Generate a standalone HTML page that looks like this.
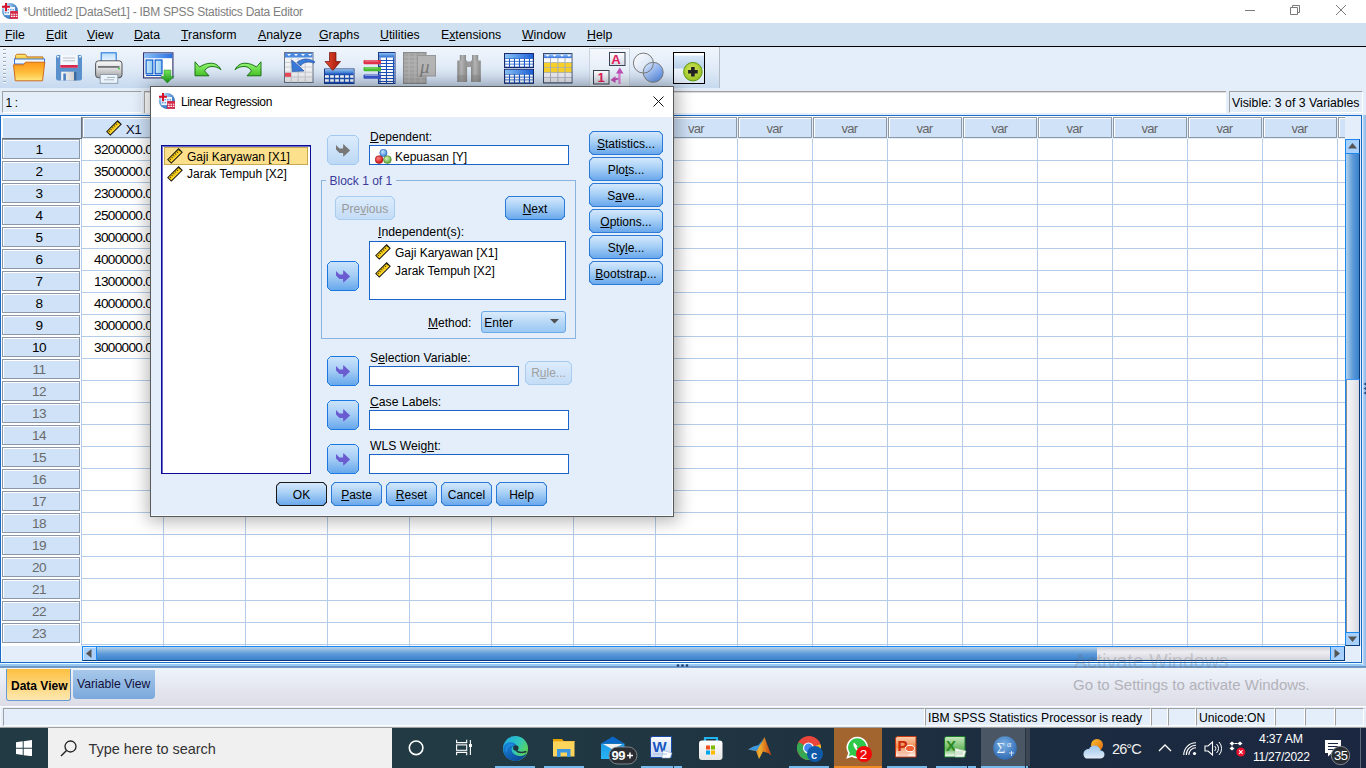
<!DOCTYPE html><html><head><meta charset="utf-8"><style>
*{margin:0;padding:0;box-sizing:border-box}
html,body{width:1366px;height:768px;overflow:hidden}
body{position:relative;font-family:"Liberation Sans",sans-serif;background:#e3eefa;color:#000}
div{position:absolute}
u{text-decoration:underline}
</style></head><body>
<div style="position:absolute;left:0px;top:0px;width:1366px;height:23px;background:#fff"></div>
<svg style="position:absolute;left:-1px;top:0px" width="22" height="22" viewBox="0 0 22 22"><defs><radialGradient id="ic1" cx="0.3" cy="0.3" r="0.75"><stop offset="0" stop-color="#d8f0fc"/><stop offset="0.55" stop-color="#6aa4dc"/><stop offset="1" stop-color="#2a64b0"/></radialGradient></defs><circle cx="10.9" cy="10.9" r="8" fill="url(#ic1)"/><rect x="5.3" y="7" width="10.7" height="8" fill="#eef5fc"/><path d="M8.5 9.8h1.5M11 9.8h1.5M13.5 9.8h1.5M6 12.8h1.5M8.5 12.8h1.5M11 12.8h1.5" stroke="#3a7ad0" stroke-width="1"/><path d="M7 2.9v8.3M3 6.7h7.9" stroke="#d8102a" stroke-width="2"/><rect x="11.2" y="11" width="7.8" height="7.9" fill="#d42a4a"/><path d="M12 14.2h1.6M14.4 14.2h1.6M16.8 14.2h1.6M12 16.4h1.6M14.4 16.4h1.6M16.8 16.4h1.6" stroke="#fff" stroke-width="1.1"/></svg>
<div style="position:absolute;left:23px;top:6.14px;font-size:12px;line-height:1;white-space:pre;color:#7e7e7e;letter-spacing:-0.26px">*Untitled2 [DataSet1] - IBM SPSS Statistics Data Editor</div>
<div style="position:absolute;left:1245px;top:10px;width:10px;height:1px;background:#7a7a7a"></div>
<svg style="position:absolute;left:1289px;top:4px" width="12" height="12" viewBox="0 0 12 12"><path d="M1.5 3.5h7v7h-7zM3.5 3.5v-2h7v7h-2" fill="none" stroke="#7a7a7a" stroke-width="1"/></svg>
<svg style="position:absolute;left:1335px;top:4px" width="12" height="12" viewBox="0 0 12 12"><path d="M1 1L11 11M11 1L1 11" stroke="#7a7a7a" stroke-width="1"/></svg>
<div style="position:absolute;left:0px;top:23px;width:1366px;height:23px;background:#cfe0f1"></div>
<div style="position:absolute;left:0px;top:46px;width:1366px;height:1px;background:#000"></div>
<div style="position:absolute;left:5px;top:29.19px;font-size:12.3px;line-height:1;white-space:pre;color:#000;"><u>F</u>ile</div>
<div style="position:absolute;left:46px;top:29.19px;font-size:12.3px;line-height:1;white-space:pre;color:#000;"><u>E</u>dit</div>
<div style="position:absolute;left:87px;top:29.19px;font-size:12.3px;line-height:1;white-space:pre;color:#000;"><u>V</u>iew</div>
<div style="position:absolute;left:134px;top:29.19px;font-size:12.3px;line-height:1;white-space:pre;color:#000;"><u>D</u>ata</div>
<div style="position:absolute;left:181px;top:29.19px;font-size:12.3px;line-height:1;white-space:pre;color:#000;"><u>T</u>ransform</div>
<div style="position:absolute;left:258px;top:29.19px;font-size:12.3px;line-height:1;white-space:pre;color:#000;"><u>A</u>nalyze</div>
<div style="position:absolute;left:319px;top:29.19px;font-size:12.3px;line-height:1;white-space:pre;color:#000;"><u>G</u>raphs</div>
<div style="position:absolute;left:380px;top:29.19px;font-size:12.3px;line-height:1;white-space:pre;color:#000;"><u>U</u>tilities</div>
<div style="position:absolute;left:441px;top:29.19px;font-size:12.3px;line-height:1;white-space:pre;color:#000;">E<u>x</u>tensions</div>
<div style="position:absolute;left:522px;top:29.19px;font-size:12.3px;line-height:1;white-space:pre;color:#000;"><u>W</u>indow</div>
<div style="position:absolute;left:587px;top:29.19px;font-size:12.3px;line-height:1;white-space:pre;color:#000;"><u>H</u>elp</div>
<div style="position:absolute;left:0px;top:47px;width:1366px;height:41px;background:#e3eefa"></div>
<div style="position:absolute;left:0px;top:47px;width:720px;height:42px;background:linear-gradient(#f0f5fc,#dfeaf7 55%,#c6d9ef);border-bottom:1px solid #a0a8b4;border-right:1px solid #b4bcc8"></div>
<div style="position:absolute;left:3px;top:49px;width:3px;height:36px;background:repeating-linear-gradient(#9aaac0 0 1px,#ffffff 1px 2px,transparent 2px 4px)"></div>
<svg style="position:absolute;left:13px;top:53px" width="33" height="29" viewBox="0 0 33 29"><defs><linearGradient id="gf" x1="0" y1="0" x2="0" y2="1"><stop offset="0" stop-color="#ff9818"/><stop offset="0.6" stop-color="#ffc040"/><stop offset="1" stop-color="#ffe880"/></linearGradient><linearGradient id="gb" x1="0" y1="0" x2="0" y2="1"><stop offset="0" stop-color="#fff080"/><stop offset="1" stop-color="#f0b020"/></linearGradient></defs>
<path d="M2.5 7.5V3.5c0-1.2 0.6-2.2 1.8-2.2h7.5c1.1 0 1.6 1 2.1 2.6h16v3.6z" fill="url(#gb)" stroke="#c06810" stroke-width="0.9"/>
<rect x="1.5" y="6" width="30" height="5" fill="#f0f8fc" stroke="#2a6ad8" stroke-width="0.9"/>
<path d="M0.5 11.8h10l2-2.6h19.3l-2.3 18.6H2.3z" fill="url(#gf)" stroke="#c86010" stroke-width="0.9"/></svg>
<svg style="position:absolute;left:56px;top:55px" width="26" height="26" viewBox="0 0 26 26"><defs><linearGradient id="gs" x1="0" y1="0" x2="1" y2="0"><stop offset="0" stop-color="#fafafa"/><stop offset="1" stop-color="#c8c8c8"/></linearGradient></defs>
<rect x="0" y="0" width="26" height="25.5" rx="2.2" fill="#5a90cc"/><rect x="4.3" y="0" width="17.5" height="12.8" fill="#f4f8fc"/>
<path d="M7 3h12M7 5.8h12" stroke="#a8b0b8" stroke-width="0.8"/><rect x="4.3" y="10" width="17.5" height="2.8" fill="#d82850"/>
<rect x="5.2" y="16.7" width="15" height="8.8" fill="url(#gs)"/><rect x="7.3" y="18.5" width="2.6" height="7" fill="#4a80c0"/><rect x="18" y="16.7" width="2.5" height="8.8" fill="#3a6aa0"/>
<rect x="1" y="1" width="2" height="1.5" fill="#e8f0f8"/><rect x="23" y="1" width="2" height="1.5" fill="#e8f0f8"/></svg>
<svg style="position:absolute;left:95px;top:52px" width="28" height="32" viewBox="0 0 28 32"><defs><linearGradient id="gp1" x1="0" y1="0" x2="0" y2="1"><stop offset="0" stop-color="#b8dcfc"/><stop offset="1" stop-color="#f4faff"/></linearGradient><linearGradient id="gp2" x1="0" y1="0" x2="0" y2="1"><stop offset="0" stop-color="#fafafa"/><stop offset="0.5" stop-color="#d8d8d8"/><stop offset="1" stop-color="#a0a0a0"/></linearGradient></defs>
<rect x="6.2" y="0.8" width="15" height="10.5" fill="url(#gp1)" stroke="#1a70d8"/>
<rect x="0.6" y="8.8" width="26.4" height="17" rx="3" fill="url(#gp2)" stroke="#404448" stroke-width="0.9"/>
<rect x="3" y="14" width="21.5" height="1.8" fill="#707478"/><rect x="23" y="15.8" width="2" height="1.5" fill="#40d040"/>
<rect x="5.2" y="22.5" width="17.6" height="8.8" fill="#eaf4fc" stroke="#8a98a8" stroke-width="0.9"/><path d="M12 25.5h8M9 27.8h10" stroke="#9aa4b0" stroke-width="0.8"/></svg>
<svg style="position:absolute;left:143px;top:52px" width="32" height="32" viewBox="0 0 32 32"><defs><linearGradient id="dh" x1="0" y1="0" x2="1" y2="0"><stop offset="0" stop-color="#8ac0f8"/><stop offset="1" stop-color="#2a70e0"/></linearGradient><linearGradient id="dc" x1="0" y1="0" x2="1" y2="0"><stop offset="0" stop-color="#d0ecfc"/><stop offset="1" stop-color="#8cc8ec"/></linearGradient><linearGradient id="da" x1="0" y1="0" x2="0" y2="1"><stop offset="0" stop-color="#7ae860"/><stop offset="1" stop-color="#18a018"/></linearGradient></defs>
<rect x="0.6" y="0.9" width="29.3" height="25" fill="#fff" stroke="#2a2a6a" stroke-width="1.1"/><rect x="1.2" y="1.5" width="28.2" height="4.7" fill="url(#dh)"/>
<rect x="3.1" y="8" width="6.7" height="13.8" fill="url(#dc)" stroke="#0a5ad0" stroke-width="1.2"/><rect x="12.2" y="8" width="6.8" height="13.8" fill="url(#dc)" stroke="#0a5ad0" stroke-width="1.2"/><rect x="3" y="23" width="15.5" height="1" fill="#0a5ad0"/>
<path d="M21 18.1h6.8v6.3h3.1l-6.5 6.5-6.5-6.5h3.1z" fill="url(#da)" stroke="#108a10" stroke-width="0.5"/></svg>
<svg style="position:absolute;left:194px;top:61px" width="28" height="16" viewBox="0 0 28 16"><defs><linearGradient id="gu" x1="0" y1="0" x2="0" y2="1"><stop offset="0" stop-color="#9af878"/><stop offset="1" stop-color="#4ac828"/></linearGradient></defs>
<path d="M1 0.8V14.8H15L10.5 9.9C12.5 6.7 15 5.5 18 5.5 21.5 5.5 24.5 6.7 27 8.7 25 4.7 21.5 2.2 17 2.2 12.5 2.2 8.5 4 5.5 6Z" fill="url(#gu)" stroke="#0e6a0a" stroke-width="0.9" stroke-linejoin="round"/></svg>
<svg style="position:absolute;left:234px;top:61px" width="28" height="16" viewBox="0 0 28 16"><defs><linearGradient id="gr" x1="0" y1="0" x2="0" y2="1"><stop offset="0" stop-color="#9af878"/><stop offset="1" stop-color="#4ac828"/></linearGradient></defs>
<path d="M27 0.8V14.8H13L17.5 9.9C15.5 6.7 13 5.5 10 5.5 6.5 5.5 3.5 6.7 1 8.7 3 4.7 6.5 2.2 11 2.2 15.5 2.2 19.5 4 22.5 6Z" fill="url(#gr)" stroke="#0e6a0a" stroke-width="0.9" stroke-linejoin="round"/></svg>
<svg style="position:absolute;left:284px;top:52px" width="32" height="32" viewBox="0 0 32 32">
<rect x="0.5" y="0.5" width="28.5" height="30" fill="#f0f2f4" stroke="#6a7488"/><rect x="1" y="1" width="27.5" height="4.5" fill="#4a8ae0"/>
<path d="M3 2l2 2 2-2zM10 2l2 2 2-2zM17 2l2 2 2-2zM24 2l2 2 2-2z" fill="#fff"/>
<path d="M1 10.5h27.5M1 15h27.5M1 20.2h27.5M1 25h27.5M7.2 5.5v25M14.2 5.5v25M21.2 5.5v25" stroke="#c4c8d0" stroke-width="0.9"/>
<rect x="1" y="20.8" width="6" height="4" fill="#f04a5a"/>
<path d="M13 10.5C17 6.5 25 5.5 30.8 9.8L30 11.2C25 8.8 19.5 9.8 16.5 14Z" fill="#3a7ad8" stroke="#1a4aa0" stroke-width="0.6"/>
<path d="M7.7 8L8.3 19.5 20 19C17 16 13 12 7.7 8Z" fill="#3a7ad8" stroke="#1a4aa0" stroke-width="0.6"/></svg>
<svg style="position:absolute;left:324px;top:52px" width="31" height="32" viewBox="0 0 31 32"><defs><linearGradient id="ih" x1="0" y1="0" x2="0" y2="1"><stop offset="0" stop-color="#8ac0f0"/><stop offset="1" stop-color="#2a6ad0"/></linearGradient><linearGradient id="ia" x1="0" y1="0" x2="1" y2="0"><stop offset="0" stop-color="#e84a30"/><stop offset="1" stop-color="#a01808"/></linearGradient></defs>
<rect x="0.5" y="17" width="29.5" height="14.5" fill="#fff" stroke="#1a3a8a"/><rect x="1" y="17.5" width="28.5" height="4.5" fill="url(#ih)"/>
<path d="M1 22.5h28.5M1 26.5h28.5M1 30.5h28.5M5.5 22v9M10.5 22v9M15.5 22v9M20.5 22v9M25.5 22v9" stroke="#1a50b8" stroke-width="1.3"/>
<path d="M5.5 0.5h6.5v9h4.5L8.8 18.5 1 9.5h4.5z" fill="url(#ia)" stroke="#701008" stroke-width="0.7"/></svg>
<svg style="position:absolute;left:363px;top:52px" width="33" height="32" viewBox="0 0 33 32"><defs><linearGradient id="vh" x1="0" y1="0" x2="0" y2="1"><stop offset="0" stop-color="#8ac0f0"/><stop offset="1" stop-color="#2a6ad0"/></linearGradient></defs>
<rect x="15.5" y="0.5" width="16.5" height="31" fill="#fff" stroke="#1a3a8a"/><rect x="16" y="1" width="15.5" height="4.5" fill="url(#vh)"/>
<path d="M16 8.5h15.5M16 11.5h15.5M16 14.5h15.5M16 17.5h15.5M16 20.5h15.5M16 23.5h15.5M16 26.5h15.5M16 29.5h15.5M17 5.5v26M23.5 5.5v26M30.5 5.5v26" stroke="#1a50b8" stroke-width="1.1"/>
<rect x="0.5" y="8" width="17.5" height="4.2" rx="1" fill="#e0304a"/><rect x="0.5" y="15" width="17.5" height="4.2" rx="1" fill="#48c030"/><rect x="0.5" y="22.5" width="17.5" height="4.2" rx="1" fill="#3a58d0"/>
<path d="M2 9h13M2 16h13M2 23.5h13" stroke="#fff" stroke-opacity="0.45"/></svg>
<svg style="position:absolute;left:403px;top:52px" width="33" height="32" viewBox="0 0 33 32">
<rect x="0.5" y="0.5" width="22.5" height="31" fill="#a4a4a4" stroke="#8a8a8a"/><path d="M1 5h22M1 9h22M1 13h22M1 17h22M1 21h22M1 25h22M1 29h22M6 1v30M12 1v30M18 1v30" stroke="#b8b8b8" stroke-width="0.9"/>
<rect x="14.5" y="3.5" width="18" height="20.5" fill="#b4b4b4" stroke="#989898"/><text x="17" y="21" font-family="Liberation Serif" font-style="italic" font-size="19" fill="#7a7a7a">μ</text></svg>
<svg style="position:absolute;left:457px;top:55px" width="25" height="28" viewBox="0 0 25 28"><defs><linearGradient id="bn" x1="0" y1="0" x2="1" y2="0"><stop offset="0" stop-color="#888"/><stop offset="0.4" stop-color="#b4b4b4"/><stop offset="1" stop-color="#8a8a8a"/></linearGradient></defs>
<rect x="2.8" y="0" width="6.2" height="6.5" fill="url(#bn)"/><rect x="15" y="0" width="6.2" height="6.5" fill="url(#bn)"/>
<rect x="0.3" y="5.5" width="9.8" height="21.5" fill="url(#bn)"/><rect x="14" y="5.5" width="9.8" height="21.5" fill="url(#bn)"/>
<rect x="9.5" y="6.5" width="5" height="5.5" fill="#9a9a9a"/><rect x="0.3" y="20" width="9.8" height="7" fill="#8a8a8a" opacity="0.5"/><rect x="14" y="20" width="9.8" height="7" fill="#8a8a8a" opacity="0.5"/></svg>
<svg style="position:absolute;left:504px;top:53px" width="31" height="31" viewBox="0 0 31 31"><defs><linearGradient id="sh" x1="0" y1="0" x2="1" y2="0"><stop offset="0" stop-color="#8ac4f8"/><stop offset="1" stop-color="#1a60d8"/></linearGradient></defs><rect x="0.5" y="0.5" width="29" height="14" fill="#1a5ac8" stroke="#1a2a6a"/><rect x="1" y="1" width="28" height="4.3" fill="url(#sh)"/><rect x="1.2" y="5.9" width="3.8" height="2.0" fill="#fff"/><rect x="1.2" y="8.7" width="3.8" height="2.0" fill="#fff"/><rect x="1.2" y="11.5" width="3.8" height="2.1" fill="#fff"/><rect x="6" y="5.9" width="3.9" height="2.0" fill="#fff"/><rect x="6" y="8.7" width="3.9" height="2.0" fill="#fff"/><rect x="6" y="11.5" width="3.9" height="2.1" fill="#fff"/><rect x="11" y="5.9" width="3.9" height="2.0" fill="#fff"/><rect x="11" y="8.7" width="3.9" height="2.0" fill="#fff"/><rect x="11" y="11.5" width="3.9" height="2.1" fill="#fff"/><rect x="16" y="5.9" width="3.9" height="2.0" fill="#fff"/><rect x="16" y="8.7" width="3.9" height="2.0" fill="#fff"/><rect x="16" y="11.5" width="3.9" height="2.1" fill="#fff"/><rect x="21" y="5.9" width="3.9" height="2.0" fill="#fff"/><rect x="21" y="8.7" width="3.9" height="2.0" fill="#fff"/><rect x="21" y="11.5" width="3.9" height="2.1" fill="#fff"/><rect x="26" y="5.9" width="2.8" height="2.0" fill="#fff"/><rect x="26" y="8.7" width="2.8" height="2.0" fill="#fff"/><rect x="26" y="11.5" width="2.8" height="2.1" fill="#fff"/><rect x="0.5" y="16.3" width="29" height="14" fill="#1a5ac8" stroke="#1a2a6a"/><rect x="1" y="16.8" width="28" height="4.3" fill="url(#sh)"/><rect x="1.2" y="21.700000000000003" width="3.8" height="2.0" fill="#fff"/><rect x="1.2" y="24.5" width="3.8" height="2.0" fill="#fff"/><rect x="1.2" y="27.3" width="3.8" height="2.1" fill="#fff"/><rect x="6" y="21.700000000000003" width="3.9" height="2.0" fill="#fff"/><rect x="6" y="24.5" width="3.9" height="2.0" fill="#fff"/><rect x="6" y="27.3" width="3.9" height="2.1" fill="#fff"/><rect x="11" y="21.700000000000003" width="3.9" height="2.0" fill="#fff"/><rect x="11" y="24.5" width="3.9" height="2.0" fill="#fff"/><rect x="11" y="27.3" width="3.9" height="2.1" fill="#fff"/><rect x="16" y="21.700000000000003" width="3.9" height="2.0" fill="#fff"/><rect x="16" y="24.5" width="3.9" height="2.0" fill="#fff"/><rect x="16" y="27.3" width="3.9" height="2.1" fill="#fff"/><rect x="21" y="21.700000000000003" width="3.9" height="2.0" fill="#fff"/><rect x="21" y="24.5" width="3.9" height="2.0" fill="#fff"/><rect x="21" y="27.3" width="3.9" height="2.1" fill="#fff"/><rect x="26" y="21.700000000000003" width="2.8" height="2.0" fill="#fff"/><rect x="26" y="24.5" width="2.8" height="2.0" fill="#fff"/><rect x="26" y="27.3" width="2.8" height="2.1" fill="#fff"/></svg>
<svg style="position:absolute;left:543px;top:53px" width="30" height="31" viewBox="0 0 30 31"><defs><linearGradient id="sc" x1="0" y1="0" x2="0" y2="1"><stop offset="0" stop-color="#a0c8f8"/><stop offset="1" stop-color="#3a78e0"/></linearGradient></defs><rect x="0.5" y="0.5" width="28.5" height="29.5" fill="#a4acbc" stroke="#3a4a6a"/><rect x="1" y="1" width="27.5" height="4" fill="url(#sc)"/><path d="M2.5 1.8l2 2 2-2zM9.5 1.8l2 2 2-2zM17 1.8l2 2 2-2zM24 1.8l2 2 2-2z" fill="#fff"/><rect x="1" y="5.2" width="6.0" height="4.0" fill="#fafafa"/><rect x="1" y="9.9" width="6.0" height="4.4" fill="#f8d028"/><rect x="1" y="15" width="6.0" height="4.2" fill="#f8d028"/><rect x="1" y="19.9" width="6.0" height="4.3" fill="#ececf0"/><rect x="1" y="24.9" width="6.0" height="4.1" fill="#e4e4ea"/><rect x="8" y="5.2" width="6.4" height="4.0" fill="#fafafa"/><rect x="8" y="9.9" width="6.4" height="4.4" fill="#f8d028"/><rect x="8" y="15" width="6.4" height="4.2" fill="#f8d028"/><rect x="8" y="19.9" width="6.4" height="4.3" fill="#ececf0"/><rect x="8" y="24.9" width="6.4" height="4.1" fill="#e4e4ea"/><rect x="15.4" y="5.2" width="6.1" height="4.0" fill="#fafafa"/><rect x="15.4" y="9.9" width="6.1" height="4.4" fill="#f8d028"/><rect x="15.4" y="15" width="6.1" height="4.2" fill="#f8d028"/><rect x="15.4" y="19.9" width="6.1" height="4.3" fill="#ececf0"/><rect x="15.4" y="24.9" width="6.1" height="4.1" fill="#e4e4ea"/><rect x="22.5" y="5.2" width="6.0" height="4.0" fill="#fafafa"/><rect x="22.5" y="9.9" width="6.0" height="4.4" fill="#f8d028"/><rect x="22.5" y="15" width="6.0" height="4.2" fill="#f8d028"/><rect x="22.5" y="19.9" width="6.0" height="4.3" fill="#ececf0"/><rect x="22.5" y="24.9" width="6.0" height="4.1" fill="#e4e4ea"/></svg>
<div style="position:absolute;left:589px;top:48px;width:41px;height:40px;border:1px solid #c8d4e0;border-bottom:none;background:linear-gradient(#f4f8fc,#dde8f4)"></div>
<svg style="position:absolute;left:593px;top:52px" width="33" height="33" viewBox="0 0 33 33"><defs><linearGradient id="vb" x1="0" y1="0" x2="0" y2="1"><stop offset="0" stop-color="#fff"/><stop offset="1" stop-color="#d4dae4"/></linearGradient><linearGradient id="va" x1="0" y1="0" x2="1" y2="0"><stop offset="0" stop-color="#b040a8"/><stop offset="1" stop-color="#e080d8"/></linearGradient></defs>
<rect x="16.5" y="0.5" width="15.5" height="13" fill="url(#vb)" stroke="#3a4456"/><text x="18.3" y="12" font-family="Liberation Sans" font-weight="bold" font-size="13" fill="#e0205a">A</text>
<rect x="0.5" y="18.5" width="15.5" height="13.5" fill="url(#vb)" stroke="#3a4456"/><text x="4.5" y="30" font-family="Liberation Sans" font-weight="bold" font-size="13" fill="#e0205a">1</text>
<path d="M26.5 32V21M26.5 26.5C25 26.5 23.5 27 22 27.5" fill="none" stroke="url(#va)" stroke-width="2.2"/><path d="M23 21.5L26.8 15.5 30.5 21.5z" fill="#c050b8"/><path d="M22.5 24L17.5 28 22.5 31z" fill="#c050b8"/></svg>
<svg style="position:absolute;left:632px;top:52px" width="33" height="32" viewBox="0 0 33 32">
<defs><linearGradient id="cb1" x1="0" y1="0" x2="1" y2="1"><stop offset="0" stop-color="#ffffff"/><stop offset="1" stop-color="#c8d8f0"/></linearGradient><linearGradient id="cb2" x1="0" y1="0" x2="1" y2="1"><stop offset="0" stop-color="#e0ecfc"/><stop offset="1" stop-color="#4a82e4"/></linearGradient></defs>
<circle cx="11.4" cy="11.1" r="10" fill="url(#cb1)"/><circle cx="21.2" cy="20.3" r="10" fill="url(#cb2)" stroke="#7a7a7a" stroke-width="1"/><circle cx="11.4" cy="11.1" r="10" fill="none" stroke="#7a7a7a" stroke-width="1"/></svg>
<div style="position:absolute;left:673px;top:52px;width:32px;height:32px;border:1px solid #000;background:linear-gradient(#ffffff 0 2px,#d8e8f8 3px,#b8d0ea 15px,#eef4fc 16px,#dce8f6)"></div>
<svg style="position:absolute;left:683px;top:62px" width="20" height="20" viewBox="0 0 20 20"><defs><radialGradient id="gc" cx="0.45" cy="0.4" r="0.6"><stop offset="0" stop-color="#d8e860"/><stop offset="1" stop-color="#98c020"/></radialGradient></defs>
<circle cx="9.9" cy="9.7" r="9.3" fill="url(#gc)" stroke="#5a9a10" stroke-width="1"/><path d="M9.9 5v9.5M5.1 9.7h9.6" stroke="#222" stroke-width="3.6"/></svg>
<div style="position:absolute;left:0px;top:88px;width:1366px;height:27px;background:#e3eefa"></div>
<div style="position:absolute;left:2px;top:91px;width:140px;height:22px;border-top:1px solid #a0a0a0;border-left:1px solid #a0a0a0;border-right:1px solid #f4f8fc;border-bottom:1px solid #fff;background:#e3eefa"></div>
<div style="position:absolute;left:5.5px;top:97.44px;font-size:12px;line-height:1;white-space:pre;color:#000;letter-spacing:-0.4px">1 :</div>
<div style="position:absolute;left:144px;top:91px;width:1082px;height:22px;border-top:1px solid #a0a0a0;border-left:1px solid #a8a8a8;background:#fff;box-shadow:inset 0 1px 0 #dcdcdc"></div>
<div style="position:absolute;left:1229px;top:91px;width:134px;height:22px;border-top:1px solid #a0a0a0;border-left:1px solid #a0a0a0;border-right:1px solid #fff;border-bottom:1px solid #fff;background:#e3eefa"></div>
<div style="position:absolute;left:1232px;top:96.79px;font-size:12.3px;line-height:1;white-space:pre;color:#000;">Visible: 3 of 3 Variables</div>
<div style="position:absolute;left:0px;top:115px;width:1366px;height:550px;background:#fff"></div>
<div style="position:absolute;left:0px;top:115px;width:1366px;height:24px;background:#e3eefa"></div>
<div style="position:absolute;left:0px;top:115px;width:1363px;height:1px;background:#1a6ac8"></div>
<div style="position:absolute;left:0px;top:115px;width:1px;height:550px;background:#1a6ac8"></div>
<div style="position:absolute;left:1361px;top:115px;width:1px;height:549px;background:#1a6ac8"></div>
<div style="position:absolute;left:1px;top:116px;width:1360px;height:2px;background:#fff"></div>
<div style="position:absolute;left:1px;top:116px;width:2px;height:530px;background:#fff"></div>
<div style="position:absolute;left:81px;top:139px;width:1px;height:507px;background:#b4cce8"></div>
<div style="position:absolute;left:163px;top:139px;width:1px;height:507px;background:#b4cce8"></div>
<div style="position:absolute;left:245px;top:139px;width:1px;height:507px;background:#b4cce8"></div>
<div style="position:absolute;left:327px;top:139px;width:1px;height:507px;background:#b4cce8"></div>
<div style="position:absolute;left:409px;top:139px;width:1px;height:507px;background:#b4cce8"></div>
<div style="position:absolute;left:491px;top:139px;width:1px;height:507px;background:#b4cce8"></div>
<div style="position:absolute;left:573px;top:139px;width:1px;height:507px;background:#b4cce8"></div>
<div style="position:absolute;left:655px;top:139px;width:1px;height:507px;background:#b4cce8"></div>
<div style="position:absolute;left:737px;top:139px;width:1px;height:507px;background:#b4cce8"></div>
<div style="position:absolute;left:812px;top:139px;width:1px;height:507px;background:#b4cce8"></div>
<div style="position:absolute;left:887px;top:139px;width:1px;height:507px;background:#b4cce8"></div>
<div style="position:absolute;left:962px;top:139px;width:1px;height:507px;background:#b4cce8"></div>
<div style="position:absolute;left:1037px;top:139px;width:1px;height:507px;background:#b4cce8"></div>
<div style="position:absolute;left:1112px;top:139px;width:1px;height:507px;background:#b4cce8"></div>
<div style="position:absolute;left:1187px;top:139px;width:1px;height:507px;background:#b4cce8"></div>
<div style="position:absolute;left:1262px;top:139px;width:1px;height:507px;background:#b4cce8"></div>
<div style="position:absolute;left:1337px;top:139px;width:1px;height:507px;background:#b4cce8"></div>
<div style="position:absolute;left:81px;top:160px;width:1264px;height:1px;background:#b4cce8"></div>
<div style="position:absolute;left:81px;top:182px;width:1264px;height:1px;background:#b4cce8"></div>
<div style="position:absolute;left:81px;top:204px;width:1264px;height:1px;background:#b4cce8"></div>
<div style="position:absolute;left:81px;top:226px;width:1264px;height:1px;background:#b4cce8"></div>
<div style="position:absolute;left:81px;top:248px;width:1264px;height:1px;background:#b4cce8"></div>
<div style="position:absolute;left:81px;top:270px;width:1264px;height:1px;background:#b4cce8"></div>
<div style="position:absolute;left:81px;top:292px;width:1264px;height:1px;background:#b4cce8"></div>
<div style="position:absolute;left:81px;top:314px;width:1264px;height:1px;background:#b4cce8"></div>
<div style="position:absolute;left:81px;top:336px;width:1264px;height:1px;background:#b4cce8"></div>
<div style="position:absolute;left:81px;top:358px;width:1264px;height:1px;background:#b4cce8"></div>
<div style="position:absolute;left:81px;top:380px;width:1264px;height:1px;background:#b4cce8"></div>
<div style="position:absolute;left:81px;top:402px;width:1264px;height:1px;background:#b4cce8"></div>
<div style="position:absolute;left:81px;top:424px;width:1264px;height:1px;background:#b4cce8"></div>
<div style="position:absolute;left:81px;top:446px;width:1264px;height:1px;background:#b4cce8"></div>
<div style="position:absolute;left:81px;top:468px;width:1264px;height:1px;background:#b4cce8"></div>
<div style="position:absolute;left:81px;top:490px;width:1264px;height:1px;background:#b4cce8"></div>
<div style="position:absolute;left:81px;top:512px;width:1264px;height:1px;background:#b4cce8"></div>
<div style="position:absolute;left:81px;top:534px;width:1264px;height:1px;background:#b4cce8"></div>
<div style="position:absolute;left:81px;top:556px;width:1264px;height:1px;background:#b4cce8"></div>
<div style="position:absolute;left:81px;top:578px;width:1264px;height:1px;background:#b4cce8"></div>
<div style="position:absolute;left:81px;top:600px;width:1264px;height:1px;background:#b4cce8"></div>
<div style="position:absolute;left:81px;top:622px;width:1264px;height:1px;background:#b4cce8"></div>
<div style="position:absolute;left:81px;top:644px;width:1264px;height:1px;background:#b4cce8"></div>
<div style="position:absolute;left:1px;top:139px;width:80px;height:507px;background:#fff"></div>
<div style="position:absolute;left:81px;top:138px;width:1px;height:1px;background:#b4cce8"></div>
<div style="position:absolute;left:81px;top:160px;width:1px;height:1px;background:#b4cce8"></div>
<div style="position:absolute;left:81px;top:182px;width:1px;height:1px;background:#b4cce8"></div>
<div style="position:absolute;left:81px;top:204px;width:1px;height:1px;background:#b4cce8"></div>
<div style="position:absolute;left:81px;top:226px;width:1px;height:1px;background:#b4cce8"></div>
<div style="position:absolute;left:81px;top:248px;width:1px;height:1px;background:#b4cce8"></div>
<div style="position:absolute;left:81px;top:270px;width:1px;height:1px;background:#b4cce8"></div>
<div style="position:absolute;left:81px;top:292px;width:1px;height:1px;background:#b4cce8"></div>
<div style="position:absolute;left:81px;top:314px;width:1px;height:1px;background:#b4cce8"></div>
<div style="position:absolute;left:81px;top:336px;width:1px;height:1px;background:#b4cce8"></div>
<div style="position:absolute;left:81px;top:358px;width:1px;height:1px;background:#b4cce8"></div>
<div style="position:absolute;left:81px;top:380px;width:1px;height:1px;background:#b4cce8"></div>
<div style="position:absolute;left:81px;top:402px;width:1px;height:1px;background:#b4cce8"></div>
<div style="position:absolute;left:81px;top:424px;width:1px;height:1px;background:#b4cce8"></div>
<div style="position:absolute;left:81px;top:446px;width:1px;height:1px;background:#b4cce8"></div>
<div style="position:absolute;left:81px;top:468px;width:1px;height:1px;background:#b4cce8"></div>
<div style="position:absolute;left:81px;top:490px;width:1px;height:1px;background:#b4cce8"></div>
<div style="position:absolute;left:81px;top:512px;width:1px;height:1px;background:#b4cce8"></div>
<div style="position:absolute;left:81px;top:534px;width:1px;height:1px;background:#b4cce8"></div>
<div style="position:absolute;left:81px;top:556px;width:1px;height:1px;background:#b4cce8"></div>
<div style="position:absolute;left:81px;top:578px;width:1px;height:1px;background:#b4cce8"></div>
<div style="position:absolute;left:81px;top:600px;width:1px;height:1px;background:#b4cce8"></div>
<div style="position:absolute;left:81px;top:622px;width:1px;height:1px;background:#b4cce8"></div>
<div style="position:absolute;left:3px;top:118px;width:78px;height:20px;background:#cfe2f8"></div>
<div style="position:absolute;left:81px;top:117px;width:1px;height:22px;background:#6a6e76"></div>
<div style="position:absolute;left:2px;top:138px;width:80px;height:1px;background:#6a6e76"></div>
<div style="position:absolute;left:82px;top:117px;width:81px;height:21px;background:#cfe2f8;border:1px solid #8c98a6;box-shadow:inset 1px 1px 0 #fff"></div>
<div style="position:absolute;left:164px;top:117px;width:81px;height:21px;background:#cfe2f8;border:1px solid #8c98a6;box-shadow:inset 1px 1px 0 #fff"></div>
<div style="position:absolute;left:246px;top:117px;width:81px;height:21px;background:#cfe2f8;border:1px solid #8c98a6;box-shadow:inset 1px 1px 0 #fff"></div>
<div style="position:absolute;left:328px;top:117px;width:81px;height:21px;background:#cfe2f8;border:1px solid #8c98a6;box-shadow:inset 1px 1px 0 #fff"></div>
<div style="position:absolute;left:410px;top:117px;width:81px;height:21px;background:#cfe2f8;border:1px solid #8c98a6;box-shadow:inset 1px 1px 0 #fff"></div>
<div style="position:absolute;left:492px;top:117px;width:81px;height:21px;background:#cfe2f8;border:1px solid #8c98a6;box-shadow:inset 1px 1px 0 #fff"></div>
<div style="position:absolute;left:574px;top:117px;width:81px;height:21px;background:#cfe2f8;border:1px solid #8c98a6;box-shadow:inset 1px 1px 0 #fff"></div>
<div style="position:absolute;left:656px;top:117px;width:81px;height:21px;background:#cfe2f8;border:1px solid #8c98a6;box-shadow:inset 1px 1px 0 #fff"></div>
<div style="position:absolute;left:738px;top:117px;width:74px;height:21px;background:#cfe2f8;border:1px solid #8c98a6;box-shadow:inset 1px 1px 0 #fff"></div>
<div style="position:absolute;left:813px;top:117px;width:74px;height:21px;background:#cfe2f8;border:1px solid #8c98a6;box-shadow:inset 1px 1px 0 #fff"></div>
<div style="position:absolute;left:888px;top:117px;width:74px;height:21px;background:#cfe2f8;border:1px solid #8c98a6;box-shadow:inset 1px 1px 0 #fff"></div>
<div style="position:absolute;left:963px;top:117px;width:74px;height:21px;background:#cfe2f8;border:1px solid #8c98a6;box-shadow:inset 1px 1px 0 #fff"></div>
<div style="position:absolute;left:1038px;top:117px;width:74px;height:21px;background:#cfe2f8;border:1px solid #8c98a6;box-shadow:inset 1px 1px 0 #fff"></div>
<div style="position:absolute;left:1113px;top:117px;width:74px;height:21px;background:#cfe2f8;border:1px solid #8c98a6;box-shadow:inset 1px 1px 0 #fff"></div>
<div style="position:absolute;left:1188px;top:117px;width:74px;height:21px;background:#cfe2f8;border:1px solid #8c98a6;box-shadow:inset 1px 1px 0 #fff"></div>
<div style="position:absolute;left:1263px;top:117px;width:74px;height:21px;background:#cfe2f8;border:1px solid #8c98a6;box-shadow:inset 1px 1px 0 #fff"></div>
<div style="position:absolute;left:1338px;top:117px;width:7px;height:21px;background:#cfe2f8;border:1px solid #8c98a6;border-right:none;box-shadow:inset 1px 1px 0 #fff"></div>
<div style="position:absolute;left:1345px;top:116px;width:16px;height:530px;background:#e3eefa"></div>
<svg style="position:absolute;left:106px;top:120px" width="17" height="16" viewBox="0 0 17 16"><path d="M0.8 11.5L11.6 0.8l3.5 3.5L4.3 15z" fill="#f8cc10" stroke="#141414" stroke-width="1.05"/><path d="M3 11.6l9.6-9.4" stroke="#2a2a20" stroke-width="1.3" stroke-dasharray="0.9 1.6"/><path d="M4.5 13l9-8.8" stroke="#fff0a0" stroke-width="0.7" opacity="0.6"/></svg>
<div style="position:absolute;left:125.8px;top:123.49px;font-size:13.6px;line-height:1;white-space:pre;color:#10102a;letter-spacing:-0.6px">X1</div>
<div style="position:absolute;left:655px;top:122.0px;font-size:13px;line-height:1;white-space:pre;color:#666;width:82px;text-align:center;letter-spacing:-0.7px">var</div>
<div style="position:absolute;left:737px;top:122.0px;font-size:13px;line-height:1;white-space:pre;color:#666;width:75px;text-align:center;letter-spacing:-0.7px">var</div>
<div style="position:absolute;left:812px;top:122.0px;font-size:13px;line-height:1;white-space:pre;color:#666;width:75px;text-align:center;letter-spacing:-0.7px">var</div>
<div style="position:absolute;left:887px;top:122.0px;font-size:13px;line-height:1;white-space:pre;color:#666;width:75px;text-align:center;letter-spacing:-0.7px">var</div>
<div style="position:absolute;left:962px;top:122.0px;font-size:13px;line-height:1;white-space:pre;color:#666;width:75px;text-align:center;letter-spacing:-0.7px">var</div>
<div style="position:absolute;left:1037px;top:122.0px;font-size:13px;line-height:1;white-space:pre;color:#666;width:75px;text-align:center;letter-spacing:-0.7px">var</div>
<div style="position:absolute;left:1112px;top:122.0px;font-size:13px;line-height:1;white-space:pre;color:#666;width:75px;text-align:center;letter-spacing:-0.7px">var</div>
<div style="position:absolute;left:1187px;top:122.0px;font-size:13px;line-height:1;white-space:pre;color:#666;width:75px;text-align:center;letter-spacing:-0.7px">var</div>
<div style="position:absolute;left:1262px;top:122.0px;font-size:13px;line-height:1;white-space:pre;color:#666;width:75px;text-align:center;letter-spacing:-0.7px">var</div>
<div style="position:absolute;left:2px;top:139px;width:78px;height:20px;background:#cfe2f8;border:1px solid #8c98a6;box-shadow:inset 1px 1px 0 #fff"></div>
<div style="position:absolute;left:2px;top:142.99px;font-size:13.6px;line-height:1;white-space:pre;color:#000;width:74px;text-align:center;letter-spacing:-0.6px">1</div>
<div style="position:absolute;left:2px;top:161px;width:78px;height:20px;background:#cfe2f8;border:1px solid #8c98a6;box-shadow:inset 1px 1px 0 #fff"></div>
<div style="position:absolute;left:2px;top:164.99px;font-size:13.6px;line-height:1;white-space:pre;color:#000;width:74px;text-align:center;letter-spacing:-0.6px">2</div>
<div style="position:absolute;left:2px;top:183px;width:78px;height:20px;background:#cfe2f8;border:1px solid #8c98a6;box-shadow:inset 1px 1px 0 #fff"></div>
<div style="position:absolute;left:2px;top:186.99px;font-size:13.6px;line-height:1;white-space:pre;color:#000;width:74px;text-align:center;letter-spacing:-0.6px">3</div>
<div style="position:absolute;left:2px;top:205px;width:78px;height:20px;background:#cfe2f8;border:1px solid #8c98a6;box-shadow:inset 1px 1px 0 #fff"></div>
<div style="position:absolute;left:2px;top:208.99px;font-size:13.6px;line-height:1;white-space:pre;color:#000;width:74px;text-align:center;letter-spacing:-0.6px">4</div>
<div style="position:absolute;left:2px;top:227px;width:78px;height:20px;background:#cfe2f8;border:1px solid #8c98a6;box-shadow:inset 1px 1px 0 #fff"></div>
<div style="position:absolute;left:2px;top:230.99px;font-size:13.6px;line-height:1;white-space:pre;color:#000;width:74px;text-align:center;letter-spacing:-0.6px">5</div>
<div style="position:absolute;left:2px;top:249px;width:78px;height:20px;background:#cfe2f8;border:1px solid #8c98a6;box-shadow:inset 1px 1px 0 #fff"></div>
<div style="position:absolute;left:2px;top:252.99px;font-size:13.6px;line-height:1;white-space:pre;color:#000;width:74px;text-align:center;letter-spacing:-0.6px">6</div>
<div style="position:absolute;left:2px;top:271px;width:78px;height:20px;background:#cfe2f8;border:1px solid #8c98a6;box-shadow:inset 1px 1px 0 #fff"></div>
<div style="position:absolute;left:2px;top:274.99px;font-size:13.6px;line-height:1;white-space:pre;color:#000;width:74px;text-align:center;letter-spacing:-0.6px">7</div>
<div style="position:absolute;left:2px;top:293px;width:78px;height:20px;background:#cfe2f8;border:1px solid #8c98a6;box-shadow:inset 1px 1px 0 #fff"></div>
<div style="position:absolute;left:2px;top:296.99px;font-size:13.6px;line-height:1;white-space:pre;color:#000;width:74px;text-align:center;letter-spacing:-0.6px">8</div>
<div style="position:absolute;left:2px;top:315px;width:78px;height:20px;background:#cfe2f8;border:1px solid #8c98a6;box-shadow:inset 1px 1px 0 #fff"></div>
<div style="position:absolute;left:2px;top:318.99px;font-size:13.6px;line-height:1;white-space:pre;color:#000;width:74px;text-align:center;letter-spacing:-0.6px">9</div>
<div style="position:absolute;left:2px;top:337px;width:78px;height:20px;background:#cfe2f8;border:1px solid #8c98a6;box-shadow:inset 1px 1px 0 #fff"></div>
<div style="position:absolute;left:2px;top:340.99px;font-size:13.6px;line-height:1;white-space:pre;color:#000;width:74px;text-align:center;letter-spacing:-0.6px">10</div>
<div style="position:absolute;left:2px;top:359px;width:78px;height:20px;background:#cfe2f8;border:1px solid #8c98a6;box-shadow:inset 1px 1px 0 #fff"></div>
<div style="position:absolute;left:2px;top:362.99px;font-size:13.6px;line-height:1;white-space:pre;color:#6a6a6a;width:74px;text-align:center;letter-spacing:-0.6px">11</div>
<div style="position:absolute;left:2px;top:381px;width:78px;height:20px;background:#cfe2f8;border:1px solid #8c98a6;box-shadow:inset 1px 1px 0 #fff"></div>
<div style="position:absolute;left:2px;top:384.99px;font-size:13.6px;line-height:1;white-space:pre;color:#6a6a6a;width:74px;text-align:center;letter-spacing:-0.6px">12</div>
<div style="position:absolute;left:2px;top:403px;width:78px;height:20px;background:#cfe2f8;border:1px solid #8c98a6;box-shadow:inset 1px 1px 0 #fff"></div>
<div style="position:absolute;left:2px;top:406.99px;font-size:13.6px;line-height:1;white-space:pre;color:#6a6a6a;width:74px;text-align:center;letter-spacing:-0.6px">13</div>
<div style="position:absolute;left:2px;top:425px;width:78px;height:20px;background:#cfe2f8;border:1px solid #8c98a6;box-shadow:inset 1px 1px 0 #fff"></div>
<div style="position:absolute;left:2px;top:428.99px;font-size:13.6px;line-height:1;white-space:pre;color:#6a6a6a;width:74px;text-align:center;letter-spacing:-0.6px">14</div>
<div style="position:absolute;left:2px;top:447px;width:78px;height:20px;background:#cfe2f8;border:1px solid #8c98a6;box-shadow:inset 1px 1px 0 #fff"></div>
<div style="position:absolute;left:2px;top:450.99px;font-size:13.6px;line-height:1;white-space:pre;color:#6a6a6a;width:74px;text-align:center;letter-spacing:-0.6px">15</div>
<div style="position:absolute;left:2px;top:469px;width:78px;height:20px;background:#cfe2f8;border:1px solid #8c98a6;box-shadow:inset 1px 1px 0 #fff"></div>
<div style="position:absolute;left:2px;top:472.99px;font-size:13.6px;line-height:1;white-space:pre;color:#6a6a6a;width:74px;text-align:center;letter-spacing:-0.6px">16</div>
<div style="position:absolute;left:2px;top:491px;width:78px;height:20px;background:#cfe2f8;border:1px solid #8c98a6;box-shadow:inset 1px 1px 0 #fff"></div>
<div style="position:absolute;left:2px;top:494.99px;font-size:13.6px;line-height:1;white-space:pre;color:#6a6a6a;width:74px;text-align:center;letter-spacing:-0.6px">17</div>
<div style="position:absolute;left:2px;top:513px;width:78px;height:20px;background:#cfe2f8;border:1px solid #8c98a6;box-shadow:inset 1px 1px 0 #fff"></div>
<div style="position:absolute;left:2px;top:516.99px;font-size:13.6px;line-height:1;white-space:pre;color:#6a6a6a;width:74px;text-align:center;letter-spacing:-0.6px">18</div>
<div style="position:absolute;left:2px;top:535px;width:78px;height:20px;background:#cfe2f8;border:1px solid #8c98a6;box-shadow:inset 1px 1px 0 #fff"></div>
<div style="position:absolute;left:2px;top:538.99px;font-size:13.6px;line-height:1;white-space:pre;color:#6a6a6a;width:74px;text-align:center;letter-spacing:-0.6px">19</div>
<div style="position:absolute;left:2px;top:557px;width:78px;height:20px;background:#cfe2f8;border:1px solid #8c98a6;box-shadow:inset 1px 1px 0 #fff"></div>
<div style="position:absolute;left:2px;top:560.99px;font-size:13.6px;line-height:1;white-space:pre;color:#6a6a6a;width:74px;text-align:center;letter-spacing:-0.6px">20</div>
<div style="position:absolute;left:2px;top:579px;width:78px;height:20px;background:#cfe2f8;border:1px solid #8c98a6;box-shadow:inset 1px 1px 0 #fff"></div>
<div style="position:absolute;left:2px;top:582.99px;font-size:13.6px;line-height:1;white-space:pre;color:#6a6a6a;width:74px;text-align:center;letter-spacing:-0.6px">21</div>
<div style="position:absolute;left:2px;top:601px;width:78px;height:20px;background:#cfe2f8;border:1px solid #8c98a6;box-shadow:inset 1px 1px 0 #fff"></div>
<div style="position:absolute;left:2px;top:604.99px;font-size:13.6px;line-height:1;white-space:pre;color:#6a6a6a;width:74px;text-align:center;letter-spacing:-0.6px">22</div>
<div style="position:absolute;left:2px;top:623px;width:78px;height:20px;background:#cfe2f8;border:1px solid #8c98a6;box-shadow:inset 1px 1px 0 #fff"></div>
<div style="position:absolute;left:2px;top:626.99px;font-size:13.6px;line-height:1;white-space:pre;color:#6a6a6a;width:74px;text-align:center;letter-spacing:-0.6px">23</div>
<div style="position:absolute;left:94px;top:143.29px;font-size:13.6px;line-height:1;white-space:pre;color:#000;letter-spacing:-0.68px">3200000.00</div>
<div style="position:absolute;left:94px;top:165.29px;font-size:13.6px;line-height:1;white-space:pre;color:#000;letter-spacing:-0.68px">3500000.00</div>
<div style="position:absolute;left:94px;top:187.29px;font-size:13.6px;line-height:1;white-space:pre;color:#000;letter-spacing:-0.68px">2300000.00</div>
<div style="position:absolute;left:94px;top:209.29px;font-size:13.6px;line-height:1;white-space:pre;color:#000;letter-spacing:-0.68px">2500000.00</div>
<div style="position:absolute;left:94px;top:231.29px;font-size:13.6px;line-height:1;white-space:pre;color:#000;letter-spacing:-0.68px">3000000.00</div>
<div style="position:absolute;left:94px;top:253.29px;font-size:13.6px;line-height:1;white-space:pre;color:#000;letter-spacing:-0.68px">4000000.00</div>
<div style="position:absolute;left:94px;top:275.29px;font-size:13.6px;line-height:1;white-space:pre;color:#000;letter-spacing:-0.68px">1300000.00</div>
<div style="position:absolute;left:94px;top:297.29px;font-size:13.6px;line-height:1;white-space:pre;color:#000;letter-spacing:-0.68px">4000000.00</div>
<div style="position:absolute;left:94px;top:319.29px;font-size:13.6px;line-height:1;white-space:pre;color:#000;letter-spacing:-0.68px">3000000.00</div>
<div style="position:absolute;left:94px;top:341.29px;font-size:13.6px;line-height:1;white-space:pre;color:#000;letter-spacing:-0.68px">3000000.00</div>
<div style="position:absolute;left:1345px;top:117px;width:15px;height:22px;background:#e3eefa"></div>
<div style="position:absolute;left:1345px;top:139px;width:15px;height:507px;background:linear-gradient(90deg,#8a8a90 0 1px,#f6f6f8 1px,#e8e8ee 60%,#d8d8e2);border-left:1px solid #1a88f0;border-right:1px solid #0a3a78"></div>
<div style="position:absolute;left:1345px;top:139px;width:15px;height:15px;background:#a8d0fc;border:1px solid #1a88f0;border-right-color:#0a3a78"></div>
<svg style="position:absolute;left:1348px;top:143px" width="9" height="6"><path d="M0 5.5L4.5 0 9 5.5z" fill="#555"/></svg>
<div style="position:absolute;left:1345px;top:154px;width:15px;height:226px;background:linear-gradient(90deg,#b4d2ec,#78acdc 35%,#5a98d8 55%,#3a82cc);border-left:1px solid #1a88f0;border-right:1px solid #0a3a78;border-bottom:1px solid #3a98f8"></div>
<div style="position:absolute;left:1345px;top:632px;width:15px;height:14px;background:#a8d0fc;border:1px solid #1a88f0;border-bottom-color:#0a3a78;border-right-color:#0a3a78"></div>
<svg style="position:absolute;left:1348px;top:636px" width="9" height="6"><path d="M0 0.5L4.5 6 9 0.5z" fill="#555"/></svg>
<div style="position:absolute;left:2px;top:646px;width:80px;height:17px;background:#e3eefa"></div>
<div style="position:absolute;left:82px;top:646px;width:1263px;height:15px;background:linear-gradient(#d0d0d8,#eeeef2 40%,#d4d4dc);border-top:1px solid #1a88f0;border-bottom:1px solid #0a3a78"></div>
<div style="position:absolute;left:82px;top:646px;width:15px;height:15px;background:#a8d0fc;border:1px solid #1a88f0;border-bottom-color:#0a3a78;box-shadow:inset 1px 1px 0 #d8ecff"></div>
<svg style="position:absolute;left:86px;top:649px" width="6" height="9"><path d="M5.5 0L0 4.5 5.5 9z" fill="#555"/></svg>
<div style="position:absolute;left:97px;top:646px;width:1000px;height:15px;background:linear-gradient(#b4d2ec,#78acdc 35%,#5a98d8 55%,#3a82cc);border-top:1px solid #1a88f0;border-bottom:1px solid #0a3a78"></div>
<div style="position:absolute;left:1330px;top:646px;width:15px;height:15px;background:#a8d0fc;border:1px solid #1a88f0;border-bottom-color:#0a3a78;border-right-color:#0a3a78"></div>
<svg style="position:absolute;left:1334px;top:649px" width="6" height="9"><path d="M0.5 0L6 4.5 0.5 9z" fill="#555"/></svg>
<div style="position:absolute;left:1345px;top:646px;width:15px;height:17px;background:#e3eefa"></div>
<div style="position:absolute;left:0px;top:662px;width:1362px;height:1px;background:#1a6ac8"></div>
<div style="position:absolute;left:0px;top:663px;width:1366px;height:1px;background:#e4fcff"></div>
<div style="position:absolute;left:0px;top:664px;width:1366px;height:2px;background:#98c8f6"></div>
<div style="position:absolute;left:0px;top:666px;width:1366px;height:2px;background:linear-gradient(#6a90b8,#74a2d0)"></div>
<div style="position:absolute;left:0px;top:668px;width:1366px;height:1px;background:#fff"></div>
<div style="position:absolute;left:1362px;top:115px;width:1px;height:550px;background:#e3eefa"></div>
<div style="position:absolute;left:1363px;top:115px;width:3px;height:550px;background:linear-gradient(90deg,#b4d4f4,#8ab8e8)"></div>
<svg style="position:absolute;left:1363px;top:382px" width="3" height="14"><path d="M3 0.5L0.5 2 3 3.5zM3 5L0.5 6.5 3 8zM3 9.5L0.5 11 3 12.5z" fill="#2a4a80"/></svg>
<svg style="position:absolute;left:676px;top:664px" width="14" height="3"><circle cx="2" cy="1.5" r="1.3" fill="#1a3a70"/><circle cx="6.5" cy="1.5" r="1.3" fill="#1a3a70"/><circle cx="11" cy="1.5" r="1.3" fill="#1a3a70"/></svg>
<div style="position:absolute;left:0px;top:668px;width:1366px;height:38px;background:linear-gradient(#eef3fa,#dcdce6)"></div>
<div style="position:absolute;left:6px;top:669px;width:65px;height:32px;background:linear-gradient(#fcc040,#fee8b0);border:1px solid #6a9ad4;border-top:none;border-radius:0 0 3px 3px"></div>
<div style="position:absolute;left:11px;top:679.84px;font-size:12px;line-height:1;white-space:pre;color:#000;font-weight:bold">Data View</div>
<div style="position:absolute;left:73px;top:670px;width:82px;height:29px;background:linear-gradient(#a8c8ea,#7aa8dc);border-radius:0 0 4px 4px"></div>
<div style="position:absolute;left:77px;top:677.67px;font-size:12.2px;line-height:1;white-space:pre;color:#10103a;">Variable View</div>
<div style="position:absolute;left:1074px;top:651.91px;font-size:19.6px;line-height:1;white-space:pre;color:rgba(110,110,120,0.28);">Activate Windows</div>
<div style="position:absolute;left:1073px;top:676.8px;font-size:15px;line-height:1;white-space:pre;color:#b2b2ba;">Go to Settings to activate Windows.</div>
<div style="position:absolute;left:0px;top:706px;width:1366px;height:22px;background:#e3eefa;border-top:1px solid #fff;border-left:1px solid #f4f8fc"></div>
<div style="position:absolute;left:3px;top:708px;width:922px;height:18px;border-top:1px solid #a0a0a0;border-left:1px solid #a0a0a0;border-right:1px solid #fff;border-bottom:1px solid #fff"></div>
<div style="position:absolute;left:925px;top:708px;width:226px;height:18px;border-top:1px solid #a0a0a0;border-left:1px solid #a0a0a0;border-right:1px solid #fff;border-bottom:1px solid #fff"></div>
<div style="position:absolute;left:1151px;top:708px;width:17px;height:18px;border-top:1px solid #a0a0a0;border-left:1px solid #a0a0a0;border-right:1px solid #fff;border-bottom:1px solid #fff"></div>
<div style="position:absolute;left:1168px;top:708px;width:28px;height:18px;border-top:1px solid #a0a0a0;border-left:1px solid #a0a0a0;border-right:1px solid #fff;border-bottom:1px solid #fff"></div>
<div style="position:absolute;left:1196px;top:708px;width:79px;height:18px;border-top:1px solid #a0a0a0;border-left:1px solid #a0a0a0;border-right:1px solid #fff;border-bottom:1px solid #fff"></div>
<div style="position:absolute;left:1275px;top:708px;width:30px;height:18px;border-top:1px solid #a0a0a0;border-left:1px solid #a0a0a0;border-right:1px solid #fff;border-bottom:1px solid #fff"></div>
<div style="position:absolute;left:1305px;top:708px;width:30px;height:18px;border-top:1px solid #a0a0a0;border-left:1px solid #a0a0a0;border-right:1px solid #fff;border-bottom:1px solid #fff"></div>
<div style="position:absolute;left:1335px;top:708px;width:29px;height:18px;border-top:1px solid #a0a0a0;border-left:1px solid #a0a0a0;border-right:1px solid #fff;border-bottom:1px solid #fff"></div>
<div style="position:absolute;left:928px;top:711.97px;font-size:12.2px;line-height:1;white-space:pre;color:#000;">IBM SPSS Statistics Processor is ready</div>
<div style="position:absolute;left:1199px;top:711.97px;font-size:12.2px;line-height:1;white-space:pre;color:#000;">Unicode:ON</div>
<div style="position:absolute;left:0px;top:727px;width:1366px;height:1px;background:#a0a0a0"></div>
<div style="position:absolute;left:0px;top:728px;width:1366px;height:40px;background:linear-gradient(90deg,#223a44,#213a44 35%,#1f3440 55%,#1c2c40 75%,#1b2740)"></div>
<svg style="position:absolute;left:16px;top:740px" width="16.3" height="16.3" viewBox="0 0 17 17"><path d="M0 2.3L7 1.3v6.7H0zM8 1.2L17 0v8H8zM0 9h7v6.7L0 14.7zM8 9h9v8L8 15.8z" fill="#fff"/></svg>
<div style="position:absolute;left:48px;top:728px;width:344px;height:40px;background:#f0f0f0"></div>
<svg style="position:absolute;left:60px;top:740px" width="17" height="17" viewBox="0 0 17 17"><circle cx="10.5" cy="6.5" r="5.5" fill="none" stroke="#222" stroke-width="1.3"/><path d="M6.5 10.5L1 16" stroke="#222" stroke-width="1.5"/></svg>
<div style="position:absolute;left:88.5px;top:742.23px;font-size:14.5px;line-height:1;white-space:pre;color:#333;letter-spacing:-0.05px">Type here to search</div>
<svg style="position:absolute;left:408px;top:740px" width="17" height="17"><circle cx="8.1" cy="7.8" r="6.8" fill="none" stroke="#fff" stroke-width="1.6"/></svg>
<svg style="position:absolute;left:455px;top:739px" width="18" height="17" viewBox="0 0 18 17"><path d="M1.6 0.8v2.8h10.1V0.8M1.6 16.2v-2.8h10.1v2.8" fill="none" stroke="#fff" stroke-width="1.1"/><rect x="1.6" y="5.9" width="10.1" height="5.4" fill="none" stroke="#fff" stroke-width="1.1"/><path d="M15.4 1v15" stroke="#fff" stroke-width="1.1"/><rect x="14" y="5" width="2.9" height="3" fill="#fff"/></svg>
<div style="position:absolute;left:495px;top:766px;width:40px;height:2px;background:#76b9ed"></div>
<div style="position:absolute;left:544px;top:766px;width:40px;height:2px;background:#76b9ed"></div>
<div style="position:absolute;left:641px;top:766px;width:32px;height:2px;background:#76b9ed"></div>
<div style="position:absolute;left:674px;top:766px;width:8px;height:2px;background:#76b9ed"></div>
<div style="position:absolute;left:789px;top:766px;width:40px;height:2px;background:#76b9ed"></div>
<div style="position:absolute;left:834px;top:766px;width:48px;height:2px;background:#76b9ed"></div>
<div style="position:absolute;left:887px;top:766px;width:40px;height:2px;background:#76b9ed"></div>
<div style="position:absolute;left:936px;top:766px;width:31px;height:2px;background:#76b9ed"></div>
<div style="position:absolute;left:968px;top:766px;width:8px;height:2px;background:#76b9ed"></div>
<div style="position:absolute;left:981px;top:766px;width:44px;height:2px;background:#76b9ed"></div>
<div style="position:absolute;left:1026px;top:766px;width:2px;height:2px;background:#76b9ed"></div>
<div style="position:absolute;left:834px;top:728px;width:48px;height:38px;background:#a3652f"></div>
<div style="position:absolute;left:834px;top:766px;width:48px;height:2px;background:#f08a24"></div>
<div style="position:absolute;left:981px;top:728px;width:47px;height:38px;background:#4a5664"></div>
<div style="position:absolute;left:1025px;top:728px;width:1px;height:38px;background:#2a3440"></div>
<div style="position:absolute;left:1026px;top:728px;width:4px;height:38px;background:#3a4654"></div>
<svg style="position:absolute;left:503px;top:736px" width="25" height="25" viewBox="0 0 24 24">
<defs><linearGradient id="e1" x1="0" y1="0" x2="1" y2="0.6"><stop offset="0" stop-color="#1ea8e8"/><stop offset="0.55" stop-color="#2ec4c0"/><stop offset="1" stop-color="#60d850"/></linearGradient>
<linearGradient id="e2" x1="0" y1="0" x2="0.6" y2="1"><stop offset="0" stop-color="#1a8ae0"/><stop offset="1" stop-color="#0c4a9a"/></linearGradient></defs>
<circle cx="12" cy="12" r="12" fill="url(#e1)"/>
<path d="M0.2 12.5C0.5 7.5 5 5.5 9 6.2 12 6.8 13 8.5 12.5 9 9.5 9 8 11 8.3 13.5 8.8 17 13 19.5 17 19.2 19 19 21 18 22.5 16.5 21 21 16.5 24 12 24 5.5 24 0 19 0.2 12.5Z" fill="url(#e2)"/>
<path d="M3 15C3 10 6 8 9.5 8.5" fill="none" stroke="#2aa0f0" stroke-width="1.2" opacity="0.7"/>
<circle cx="12.3" cy="11.5" r="2.6" fill="#1f3340"/>
<path d="M12.8 14C14.5 16 18.5 16.2 22.5 14.8" fill="none" stroke="#1f3340" stroke-width="1.6"/></svg>
<svg style="position:absolute;left:553px;top:739px" width="22" height="18" viewBox="0 0 22 18"><path d="M0 0h9l2 2.5H0z" fill="#e8a200"/><rect x="0" y="2" width="21.5" height="15.5" fill="#fdd55c"/><rect x="0" y="2" width="21.5" height="1" fill="#f8c040"/><path d="M4 18V10h13.5v8h-3.5v-4.5H7.5V18z" fill="#3a96e0"/></svg>
<svg style="position:absolute;left:600px;top:736px" width="38" height="29" viewBox="0 0 38 29">
<defs><linearGradient id="ml" x1="0" y1="0" x2="0" y2="1"><stop offset="0" stop-color="#1e9ae8"/><stop offset="1" stop-color="#28b4f4"/></linearGradient></defs>
<path d="M1 7.5L12.8 0.5 24.5 7.5z" fill="#0a68c8"/><rect x="1" y="7.5" width="23.5" height="15.5" fill="url(#ml)"/><path d="M3 8h19.5l-9.7 5.5z" fill="#f2f2f2"/>
<rect x="9" y="11" width="28" height="17" rx="8.5" fill="#2a2e33" stroke="#8a8e92" stroke-width="0.9"/>
<text x="11.5" y="24.3" font-family="Liberation Sans" font-size="13" font-weight="bold" fill="#fff" letter-spacing="-0.6">99</text><path d="M27 19.5h6M30 16.5v6" stroke="#fff" stroke-width="1.5"/></svg>
<svg style="position:absolute;left:650px;top:736px" width="23" height="23" viewBox="0 0 23 23"><defs><linearGradient id="wd" x1="0" y1="0" x2="0" y2="1"><stop offset="0" stop-color="#f8fbff"/><stop offset="1" stop-color="#c8d8f0"/></linearGradient></defs>
<path d="M2 0.5h19.5v21H0.5V2z" fill="url(#wd)" stroke="#1a4aa8"/><text x="2.5" y="15.5" font-family="Liberation Sans" font-weight="bold" font-size="15" fill="#1a56c0" letter-spacing="-1">W</text><path d="M13 14.5l9 2.5-2 5h-8z" fill="#fff" stroke="#9ab0d0" stroke-width="0.6"/><path d="M3 18h14" stroke="#a8c0e0"/></svg>
<svg style="position:absolute;left:699px;top:736px" width="24" height="25" viewBox="0 0 24 25"><path d="M6 6.5V2h12v4.5" fill="none" stroke="#22b4f0" stroke-width="2.2"/><defs><linearGradient id="st" x1="0" y1="0" x2="0" y2="1"><stop offset="0" stop-color="#fff"/><stop offset="1" stop-color="#e4e4e4"/></linearGradient></defs><rect x="0" y="4.5" width="23.5" height="19.5" rx="3" fill="url(#st)"/><rect x="7" y="9.5" width="4" height="4" fill="#f25022"/><rect x="12" y="9.5" width="4" height="4" fill="#7fba00"/><rect x="7" y="14.5" width="4" height="4" fill="#00a4ef"/><rect x="12" y="14.5" width="4" height="4" fill="#ffb900"/></svg>
<svg style="position:absolute;left:748px;top:736px" width="25" height="24" viewBox="0 0 25 24"><defs><linearGradient id="mt" x1="0" y1="0" x2="1" y2="0"><stop offset="0" stop-color="#a02810"/><stop offset="0.5" stop-color="#f0b030"/><stop offset="1" stop-color="#c03a10"/></linearGradient></defs>
<path d="M0 13.5L5.5 10.5 9.5 11.5 14 6 16.5 1 19 8 23.5 19.5 20 17 15 15.5 11 23 8 15z" fill="url(#mt)"/><path d="M0 13.5L5.5 10.5 10.5 9 14 4.5 16 1.5 12 9 8.5 15z" fill="#3a98e0"/></svg>
<svg style="position:absolute;left:796px;top:735px" width="28" height="28" viewBox="0 0 28 28"><circle cx="13" cy="13" r="12" fill="#e8453c"/><path d="M13 13L2.6 19A12 12 0 0 1 2.6 7z" fill="#34a853"/><path d="M13 13L2.6 19A12 12 0 0 0 13 25z" fill="#34a853"/><path d="M13 13h12A12 12 0 0 1 13 25z" fill="#fbc116"/><path d="M13 13V25A12 12 0 0 0 24.5 16.5z" fill="#fbc116"/><path d="M13 13L24.4 9.3A12 12 0 0 1 25 13z" fill="#fbc116"/><circle cx="12.5" cy="13" r="5.5" fill="#fff"/><circle cx="12.5" cy="13" r="4.4" fill="#4285f4"/>
<circle cx="19" cy="19" r="8" fill="#0e5aa8"/><text x="15" y="23.5" font-family="Liberation Sans" font-weight="bold" font-size="11" fill="#f0f4f8">c</text></svg>
<svg style="position:absolute;left:846px;top:736px" width="28" height="28" viewBox="0 0 28 28"><path d="M11.5 1.5a10 10 0 1 1-5.5 18.5L1.5 21.5 3 17A10 10 0 0 1 11.5 1.5z" fill="#2ec84a" stroke="#fff" stroke-width="1.6"/><path d="M8 6.5c-1 1-1 3 1 6s5 5 7 4.5l1-1.5-2-1.5-1 1c-1.5-0.5-3-2-3.5-3.5l1-1-1.5-2z" fill="#fff"/><circle cx="18" cy="18" r="8" fill="#f00a0a"/><text x="13.8" y="23" font-family="Liberation Sans" font-size="13.5" fill="#fff">2</text></svg>
<svg style="position:absolute;left:895px;top:736px" width="23" height="22" viewBox="0 0 23 22"><defs><linearGradient id="pp" x1="0" y1="0" x2="0" y2="1"><stop offset="0" stop-color="#fbd0b0"/><stop offset="0.5" stop-color="#f08a50"/><stop offset="1" stop-color="#fff"/></linearGradient></defs><path d="M2 0.5h19v20.5H0.5V2z" fill="url(#pp)" stroke="#c83a10"/><text x="2.5" y="14.5" font-family="Liberation Sans" font-weight="bold" font-size="15" fill="#c82a08">P</text><ellipse cx="15" cy="12.5" rx="4.5" ry="3.2" fill="#f06030" stroke="#fff"/><path d="M3 17h12M3 19h10" stroke="#f4a080" stroke-width="0.8"/></svg>
<svg style="position:absolute;left:944px;top:736px" width="23" height="22" viewBox="0 0 23 22"><defs><linearGradient id="xl" x1="0" y1="0" x2="0" y2="1"><stop offset="0" stop-color="#c8e8c0"/><stop offset="0.6" stop-color="#6ab860"/><stop offset="1" stop-color="#fff"/></linearGradient></defs><path d="M2 0.5h19v20.5H0.5V2z" fill="url(#xl)" stroke="#1a7a2a"/><text x="2" y="15" font-family="Liberation Sans" font-weight="bold" font-size="15" fill="#2a8a20">X</text><path d="M11 12l11 3-2 6h-9z" fill="#f0f8f0" stroke="#8ab88a" stroke-width="0.6"/><path d="M12 16h7M12 18h7" stroke="#8ab88a" stroke-width="0.6"/></svg>
<svg style="position:absolute;left:993px;top:736px" width="24" height="24" viewBox="0 0 24 24"><defs><radialGradient id="sp" cx="0.45" cy="0.35" r="0.7"><stop offset="0" stop-color="#7ab0e4"/><stop offset="1" stop-color="#2a66b0"/></radialGradient></defs><circle cx="12" cy="12" r="11.8" fill="url(#sp)"/><text x="3.5" y="17" font-family="Liberation Serif" font-size="15" fill="#eaf2fa">Σ</text><text x="14" y="11" font-family="Liberation Serif" font-size="8" fill="#eaf2fa">α</text><path d="M16 17h5M18.5 15v5" stroke="#eaf2fa" stroke-width="0.8"/></svg>
<svg style="position:absolute;left:1079px;top:738px" width="27" height="22" viewBox="0 0 27 22"><defs><linearGradient id="cl" x1="0" y1="0" x2="0" y2="1"><stop offset="0" stop-color="#9cc4ec"/><stop offset="1" stop-color="#e0ecf8"/></linearGradient><linearGradient id="sn" x1="0" y1="0" x2="1" y2="1"><stop offset="0" stop-color="#fcc030"/><stop offset="1" stop-color="#e06a10"/></linearGradient></defs><circle cx="18" cy="7" r="6" fill="url(#sn)"/><path d="M3 20.5h18c2.5 0 4.5-1.5 4.5-4s-2-4-4-4c-0.5-3-3-5-6-5-2.5 0-4.5 1.5-5.5 3.5-3 0-5.5 2-5.5 5 0 2 1 4.5 3.5 4.5z" fill="url(#cl)"/></svg>
<div style="position:absolute;left:1112px;top:741.73px;font-size:14.5px;line-height:1;white-space:pre;color:#f0f0f0;letter-spacing:-0.9px">26°C</div>
<svg style="position:absolute;left:1158px;top:743px" width="14" height="9"><path d="M1 8l6-6 6 6" fill="none" stroke="#fff" stroke-width="1.3"/></svg>
<svg style="position:absolute;left:1183px;top:742px" width="14" height="14" viewBox="0 0 14 14"><path d="M0.8 13A12 12 0 0 1 13 0.8M3.3 13A9.5 9.5 0 0 1 13 3.3M5.8 13A7 7 0 0 1 13 5.8" fill="none" stroke="#fff" stroke-width="1.1"/><circle cx="11.5" cy="11.5" r="1.6" fill="#fff"/></svg>
<svg style="position:absolute;left:1204px;top:741px" width="18" height="15" viewBox="0 0 18 15"><path d="M1 5h3l4.5-4v13L4 10H1z" fill="none" stroke="#fff" stroke-width="1.1"/><path d="M10.5 5a3 3 0 0 1 0 5M12.5 3a6 6 0 0 1 0 9M15 1a9.5 9.5 0 0 1 0 13" fill="none" stroke="#fff" stroke-width="1"/></svg>
<svg style="position:absolute;left:1229px;top:741px" width="17" height="16" viewBox="0 0 17 16"><path d="M0.5 2.5l2.5-2 2.5 2-2.5 2zM8.5 2.5l2.5-2 2.5 2-2.5 2zM0.5 7.5l2.5-2 2.5 2-2.5 2z" fill="#fff"/><path d="M3 4.5v1M5.5 2.5h3" stroke="#fff"/><circle cx="11.8" cy="11" r="4.5" fill="#e8102a"/><path d="M10 9.2l3.6 3.6M13.6 9.2l-3.6 3.6" stroke="#fff" stroke-width="1.1"/></svg>
<div style="position:absolute;left:1259px;top:732.59px;font-size:12.3px;line-height:1;white-space:pre;color:#fff;letter-spacing:-0.2px">4:37 AM</div>
<div style="position:absolute;left:1253px;top:750.84px;font-size:12px;line-height:1;white-space:pre;color:#fff;letter-spacing:-0.25px">11/27/2022</div>
<svg style="position:absolute;left:1324px;top:739px" width="29" height="27" viewBox="0 0 29 27"><path d="M1 1h16v13H8l-4 3.5V14H1z" fill="#fff"/><path d="M4 4.5h10M4 7.5h10M4 10.5h8" stroke="#1a2540" stroke-width="1.1"/><circle cx="16.5" cy="16.5" r="9.2" fill="#2a2d33" stroke="#8a8e94" stroke-width="0.9"/><text x="10" y="21" font-family="Liberation Sans" font-size="13" fill="#fff" letter-spacing="-0.5">35</text></svg>
<div style="position:absolute;left:1360px;top:728px;width:1px;height:40px;background:#5a6a7a"></div>
<div style="position:absolute;left:150px;top:86px;width:524px;height:431px;box-shadow:1px 1px 16px 3px rgba(0,0,0,0.30)"></div>
<div style="position:absolute;left:150px;top:86px;width:524px;height:431px;background:#e3eefa;border:1px solid #5a5a5a;box-shadow:inset -1px -1px 0 #f4faff"></div>
<div style="position:absolute;left:151px;top:87px;width:522px;height:30px;background:#fff"></div>
<svg style="position:absolute;left:156px;top:90px" width="22" height="22" viewBox="0 0 22 22"><defs><radialGradient id="ic2" cx="0.3" cy="0.3" r="0.75"><stop offset="0" stop-color="#d8f0fc"/><stop offset="0.55" stop-color="#6aa4dc"/><stop offset="1" stop-color="#2a64b0"/></radialGradient></defs><circle cx="10.9" cy="10.9" r="8" fill="url(#ic2)"/><rect x="5.3" y="7" width="10.7" height="8" fill="#eef5fc"/><path d="M8.5 9.8h1.5M11 9.8h1.5M13.5 9.8h1.5M6 12.8h1.5M8.5 12.8h1.5M11 12.8h1.5" stroke="#3a7ad0" stroke-width="1"/><path d="M7 2.9v8.3M3 6.7h7.9" stroke="#d8102a" stroke-width="2"/><rect x="11.2" y="11" width="7.8" height="7.9" fill="#d42a4a"/><path d="M12 14.2h1.6M14.4 14.2h1.6M16.8 14.2h1.6M12 16.4h1.6M14.4 16.4h1.6M16.8 16.4h1.6" stroke="#fff" stroke-width="1.1"/></svg>
<div style="position:absolute;left:181px;top:96.04px;font-size:12px;line-height:1;white-space:pre;color:#000;letter-spacing:-0.38px">Linear Regression</div>
<svg style="position:absolute;left:653px;top:96px" width="11" height="11" viewBox="0 0 11 11"><path d="M0.5 0.5L10.5 10.5M10.5 0.5L0.5 10.5" stroke="#111" stroke-width="1"/></svg>
<div style="position:absolute;left:161px;top:145px;width:150px;height:329px;background:#fff;border:1px solid #0c0c98;box-shadow:inset 1px 1px 0 #6a6ac8"></div>
<div style="position:absolute;left:164px;top:147px;width:144px;height:18px;background:#fde08c;border:1px solid #c8a850"></div>
<svg style="position:absolute;left:167px;top:148px" width="17" height="16" viewBox="0 0 17 16"><path d="M0.8 11.5L11.6 0.8l3.5 3.5L4.3 15z" fill="#f8cc10" stroke="#141414" stroke-width="1.05"/><path d="M3 11.6l9.6-9.4" stroke="#2a2a20" stroke-width="1.3" stroke-dasharray="0.9 1.6"/><path d="M4.5 13l9-8.8" stroke="#fff0a0" stroke-width="0.7" opacity="0.6"/></svg>
<div style="position:absolute;left:187px;top:151.14px;font-size:12px;line-height:1;white-space:pre;color:#000;">Gaji Karyawan [X1]</div>
<svg style="position:absolute;left:167px;top:166px" width="17" height="16" viewBox="0 0 17 16"><path d="M0.8 11.5L11.6 0.8l3.5 3.5L4.3 15z" fill="#f8cc10" stroke="#141414" stroke-width="1.05"/><path d="M3 11.6l9.6-9.4" stroke="#2a2a20" stroke-width="1.3" stroke-dasharray="0.9 1.6"/><path d="M4.5 13l9-8.8" stroke="#fff0a0" stroke-width="0.7" opacity="0.6"/></svg>
<div style="position:absolute;left:187px;top:168.34px;font-size:12px;line-height:1;white-space:pre;color:#000;">Jarak Tempuh [X2]</div>
<svg style="position:absolute;left:327px;top:135px" width="32" height="30" viewBox="0 0 32 30"><defs><linearGradient id="ab1" x1="0" y1="0" x2="0" y2="1"><stop offset="0" stop-color="#dcecfc"/><stop offset="1" stop-color="#bcd8f4"/></linearGradient></defs><path d="M3.5 0.5h25l3 3v23l-3 3h-25l-3-3v-23z" fill="url(#ab1)" stroke="#a0c8f0"/><path d="M9 9.9L12.5 13.4H16L16.3 9L23.1 15.5L16.3 21.8L16 17.9H12.5L9 14.6Z" fill="#777777"/></svg>
<div style="position:absolute;left:370px;top:130.84px;font-size:12px;line-height:1;white-space:pre;color:#000;"><u>D</u>ependent:</div>
<div style="position:absolute;left:369px;top:145px;width:200px;height:20px;background:#fff;border:1px solid #1a64c8"></div>
<svg style="position:absolute;left:375px;top:149px" width="17" height="15" viewBox="0 0 17 15"><defs><radialGradient id="bb" cx="0.4" cy="0.35" r="0.6"><stop offset="0" stop-color="#c8e4fc"/><stop offset="1" stop-color="#4a90e0"/></radialGradient><radialGradient id="br" cx="0.4" cy="0.35" r="0.6"><stop offset="0" stop-color="#ff8080"/><stop offset="1" stop-color="#d01818"/></radialGradient><radialGradient id="bg" cx="0.4" cy="0.35" r="0.6"><stop offset="0" stop-color="#d8f0b8"/><stop offset="1" stop-color="#68b040"/></radialGradient></defs><circle cx="8.4" cy="3.9" r="3.6" fill="url(#bb)" stroke="#2a64c0" stroke-width="0.7"/><circle cx="4.1" cy="10.6" r="3.9" fill="url(#br)" stroke="#901010" stroke-width="0.6"/><circle cx="12.4" cy="10.6" r="3.9" fill="url(#bg)" stroke="#3a7a20" stroke-width="0.6"/></svg>
<div style="position:absolute;left:395px;top:150.94px;font-size:12px;line-height:1;white-space:pre;color:#000;">Kepuasan [Y]</div>
<div style="position:absolute;left:321px;top:180px;width:255px;height:159px;border:1px solid #8ab4e0"></div>
<div style="position:absolute;left:326px;top:174px;width:70px;height:12px;background:#e3eefa"></div>
<div style="position:absolute;left:329.5px;top:174.64px;font-size:12px;line-height:1;white-space:pre;color:#3a3a9a;">Block 1 of 1</div>
<div style="position:absolute;left:335px;top:196px;width:60px;height:24px;background:#a8ccf0;clip-path:polygon(3.5px 0,calc(100% - 3.5px) 0,100% 3.5px,100% calc(100% - 3.5px),calc(100% - 3.5px) 100%,3.5px 100%,0 calc(100% - 3.5px),0 3.5px)"></div><div style="position:absolute;left:336px;top:197px;width:58px;height:22px;background:linear-gradient(#dcecfc,#c4dcf6);clip-path:polygon(2.9px 0,calc(100% - 2.9px) 0,100% 2.9px,100% calc(100% - 2.9px),calc(100% - 2.9px) 100%,2.9px 100%,0 calc(100% - 2.9px),0 2.9px)"></div>
<div style="position:absolute;left:341.5px;top:202.64px;font-size:12px;line-height:1;white-space:pre;color:#9a9a9a;">Pre<u>v</u>ious</div>
<div style="position:absolute;left:505px;top:196px;width:60px;height:24px;background:#2a7ad8;clip-path:polygon(3.5px 0,calc(100% - 3.5px) 0,100% 3.5px,100% calc(100% - 3.5px),calc(100% - 3.5px) 100%,3.5px 100%,0 calc(100% - 3.5px),0 3.5px)"></div><div style="position:absolute;left:506px;top:197px;width:58px;height:22px;background:linear-gradient(#d4e8fc,#a8d0f6 45%,#6aa8ec);clip-path:polygon(2.9px 0,calc(100% - 2.9px) 0,100% 2.9px,100% calc(100% - 2.9px),calc(100% - 2.9px) 100%,2.9px 100%,0 calc(100% - 2.9px),0 2.9px)"></div><div style="position:absolute;left:505px;top:203.24px;font-size:12px;line-height:1;white-space:pre;color:#000;width:60px;text-align:center"><u>N</u>ext</div>
<div style="position:absolute;left:378px;top:226.39px;font-size:12.3px;line-height:1;white-space:pre;color:#000;"><u>I</u>ndependent(s):</div>
<div style="position:absolute;left:369px;top:241px;width:197px;height:59px;background:#fff;border:1px solid #1a64c8"></div>
<svg style="position:absolute;left:375px;top:244px" width="17" height="16" viewBox="0 0 17 16"><path d="M0.8 11.5L11.6 0.8l3.5 3.5L4.3 15z" fill="#f8cc10" stroke="#141414" stroke-width="1.05"/><path d="M3 11.6l9.6-9.4" stroke="#2a2a20" stroke-width="1.3" stroke-dasharray="0.9 1.6"/><path d="M4.5 13l9-8.8" stroke="#fff0a0" stroke-width="0.7" opacity="0.6"/></svg>
<div style="position:absolute;left:395px;top:246.54px;font-size:12px;line-height:1;white-space:pre;color:#000;">Gaji Karyawan [X1]</div>
<svg style="position:absolute;left:375px;top:262px" width="17" height="16" viewBox="0 0 17 16"><path d="M0.8 11.5L11.6 0.8l3.5 3.5L4.3 15z" fill="#f8cc10" stroke="#141414" stroke-width="1.05"/><path d="M3 11.6l9.6-9.4" stroke="#2a2a20" stroke-width="1.3" stroke-dasharray="0.9 1.6"/><path d="M4.5 13l9-8.8" stroke="#fff0a0" stroke-width="0.7" opacity="0.6"/></svg>
<div style="position:absolute;left:395px;top:264.54px;font-size:12px;line-height:1;white-space:pre;color:#000;">Jarak Tempuh [X2]</div>
<svg style="position:absolute;left:327px;top:261px" width="32" height="30" viewBox="0 0 32 30"><defs><linearGradient id="ab2" x1="0" y1="0" x2="0" y2="1"><stop offset="0" stop-color="#cce4fc"/><stop offset="0.5" stop-color="#a4ccf4"/><stop offset="1" stop-color="#64a6ec"/></linearGradient></defs><path d="M3.5 0.5h25l3 3v23l-3 3h-25l-3-3v-23z" fill="url(#ab2)" stroke="#1a78e0"/><path d="M9 9.9L12.5 13.4H16L16.3 9L23.1 15.5L16.3 21.8L16 17.9H12.5L9 14.6Z" fill="#6a5cd0"/></svg>
<div style="position:absolute;left:428px;top:316.54px;font-size:12px;line-height:1;white-space:pre;color:#000;"><u>M</u>ethod:</div>
<div style="position:absolute;left:481px;top:311px;width:85px;height:22px;background:linear-gradient(#dcecfc,#b0d4f6 60%,#9cc8f2);border:1px solid #6aa8e8;border-radius:3px"></div>
<div style="position:absolute;left:484.3px;top:316.74px;font-size:12px;line-height:1;white-space:pre;color:#000;">Enter</div>
<svg style="position:absolute;left:550px;top:319px" width="9" height="5"><path d="M0 0h9L4.5 4.5z" fill="#505050"/></svg>
<div style="position:absolute;left:589px;top:131px;width:74px;height:24px;background:#2a7ad8;clip-path:polygon(3.5px 0,calc(100% - 3.5px) 0,100% 3.5px,100% calc(100% - 3.5px),calc(100% - 3.5px) 100%,3.5px 100%,0 calc(100% - 3.5px),0 3.5px)"></div><div style="position:absolute;left:590px;top:132px;width:72px;height:22px;background:linear-gradient(#d4e8fc,#a8d0f6 45%,#6aa8ec);clip-path:polygon(2.9px 0,calc(100% - 2.9px) 0,100% 2.9px,100% calc(100% - 2.9px),calc(100% - 2.9px) 100%,2.9px 100%,0 calc(100% - 2.9px),0 2.9px)"></div><div style="position:absolute;left:589px;top:138.24px;font-size:12px;line-height:1;white-space:pre;color:#000;width:74px;text-align:center"><u>S</u>tatistics...</div>
<div style="position:absolute;left:589px;top:157px;width:74px;height:24px;background:#2a7ad8;clip-path:polygon(3.5px 0,calc(100% - 3.5px) 0,100% 3.5px,100% calc(100% - 3.5px),calc(100% - 3.5px) 100%,3.5px 100%,0 calc(100% - 3.5px),0 3.5px)"></div><div style="position:absolute;left:590px;top:158px;width:72px;height:22px;background:linear-gradient(#d4e8fc,#a8d0f6 45%,#6aa8ec);clip-path:polygon(2.9px 0,calc(100% - 2.9px) 0,100% 2.9px,100% calc(100% - 2.9px),calc(100% - 2.9px) 100%,2.9px 100%,0 calc(100% - 2.9px),0 2.9px)"></div><div style="position:absolute;left:589px;top:164.24px;font-size:12px;line-height:1;white-space:pre;color:#000;width:74px;text-align:center">Plo<u>t</u>s...</div>
<div style="position:absolute;left:589px;top:183px;width:74px;height:24px;background:#2a7ad8;clip-path:polygon(3.5px 0,calc(100% - 3.5px) 0,100% 3.5px,100% calc(100% - 3.5px),calc(100% - 3.5px) 100%,3.5px 100%,0 calc(100% - 3.5px),0 3.5px)"></div><div style="position:absolute;left:590px;top:184px;width:72px;height:22px;background:linear-gradient(#d4e8fc,#a8d0f6 45%,#6aa8ec);clip-path:polygon(2.9px 0,calc(100% - 2.9px) 0,100% 2.9px,100% calc(100% - 2.9px),calc(100% - 2.9px) 100%,2.9px 100%,0 calc(100% - 2.9px),0 2.9px)"></div><div style="position:absolute;left:589px;top:190.24px;font-size:12px;line-height:1;white-space:pre;color:#000;width:74px;text-align:center">S<u>a</u>ve...</div>
<div style="position:absolute;left:589px;top:209px;width:74px;height:24px;background:#2a7ad8;clip-path:polygon(3.5px 0,calc(100% - 3.5px) 0,100% 3.5px,100% calc(100% - 3.5px),calc(100% - 3.5px) 100%,3.5px 100%,0 calc(100% - 3.5px),0 3.5px)"></div><div style="position:absolute;left:590px;top:210px;width:72px;height:22px;background:linear-gradient(#d4e8fc,#a8d0f6 45%,#6aa8ec);clip-path:polygon(2.9px 0,calc(100% - 2.9px) 0,100% 2.9px,100% calc(100% - 2.9px),calc(100% - 2.9px) 100%,2.9px 100%,0 calc(100% - 2.9px),0 2.9px)"></div><div style="position:absolute;left:589px;top:216.24px;font-size:12px;line-height:1;white-space:pre;color:#000;width:74px;text-align:center"><u>O</u>ptions...</div>
<div style="position:absolute;left:589px;top:235px;width:74px;height:24px;background:#2a7ad8;clip-path:polygon(3.5px 0,calc(100% - 3.5px) 0,100% 3.5px,100% calc(100% - 3.5px),calc(100% - 3.5px) 100%,3.5px 100%,0 calc(100% - 3.5px),0 3.5px)"></div><div style="position:absolute;left:590px;top:236px;width:72px;height:22px;background:linear-gradient(#d4e8fc,#a8d0f6 45%,#6aa8ec);clip-path:polygon(2.9px 0,calc(100% - 2.9px) 0,100% 2.9px,100% calc(100% - 2.9px),calc(100% - 2.9px) 100%,2.9px 100%,0 calc(100% - 2.9px),0 2.9px)"></div><div style="position:absolute;left:589px;top:242.24px;font-size:12px;line-height:1;white-space:pre;color:#000;width:74px;text-align:center">Sty<u>l</u>e...</div>
<div style="position:absolute;left:589px;top:261px;width:74px;height:24px;background:#2a7ad8;clip-path:polygon(3.5px 0,calc(100% - 3.5px) 0,100% 3.5px,100% calc(100% - 3.5px),calc(100% - 3.5px) 100%,3.5px 100%,0 calc(100% - 3.5px),0 3.5px)"></div><div style="position:absolute;left:590px;top:262px;width:72px;height:22px;background:linear-gradient(#d4e8fc,#a8d0f6 45%,#6aa8ec);clip-path:polygon(2.9px 0,calc(100% - 2.9px) 0,100% 2.9px,100% calc(100% - 2.9px),calc(100% - 2.9px) 100%,2.9px 100%,0 calc(100% - 2.9px),0 2.9px)"></div><div style="position:absolute;left:589px;top:268.24px;font-size:12px;line-height:1;white-space:pre;color:#000;width:74px;text-align:center"><u>B</u>ootstrap...</div>
<svg style="position:absolute;left:327px;top:356px" width="32" height="30" viewBox="0 0 32 30"><defs><linearGradient id="ab3" x1="0" y1="0" x2="0" y2="1"><stop offset="0" stop-color="#cce4fc"/><stop offset="0.5" stop-color="#a4ccf4"/><stop offset="1" stop-color="#64a6ec"/></linearGradient></defs><path d="M3.5 0.5h25l3 3v23l-3 3h-25l-3-3v-23z" fill="url(#ab3)" stroke="#1a78e0"/><path d="M9 9.9L12.5 13.4H16L16.3 9L23.1 15.5L16.3 21.8L16 17.9H12.5L9 14.6Z" fill="#6a5cd0"/></svg>
<div style="position:absolute;left:370px;top:351.77px;font-size:12.2px;line-height:1;white-space:pre;color:#000;">S<u>e</u>lection Variable:</div>
<div style="position:absolute;left:369px;top:366px;width:150px;height:20px;background:#fff;border:1px solid #1a64c8"></div>
<div style="position:absolute;left:525px;top:361px;width:47px;height:24px;background:#a8ccf0;clip-path:polygon(3.5px 0,calc(100% - 3.5px) 0,100% 3.5px,100% calc(100% - 3.5px),calc(100% - 3.5px) 100%,3.5px 100%,0 calc(100% - 3.5px),0 3.5px)"></div><div style="position:absolute;left:526px;top:362px;width:45px;height:22px;background:linear-gradient(#dcecfc,#c4dcf6);clip-path:polygon(2.9px 0,calc(100% - 2.9px) 0,100% 2.9px,100% calc(100% - 2.9px),calc(100% - 2.9px) 100%,2.9px 100%,0 calc(100% - 2.9px),0 2.9px)"></div>
<div style="position:absolute;left:525px;top:367px;font-size:12px;line-height:1;white-space:pre;color:#a0a0a0;width:47px;text-align:center">R<u>u</u>le...</div>
<svg style="position:absolute;left:327px;top:400px" width="32" height="30" viewBox="0 0 32 30"><defs><linearGradient id="ab4" x1="0" y1="0" x2="0" y2="1"><stop offset="0" stop-color="#cce4fc"/><stop offset="0.5" stop-color="#a4ccf4"/><stop offset="1" stop-color="#64a6ec"/></linearGradient></defs><path d="M3.5 0.5h25l3 3v23l-3 3h-25l-3-3v-23z" fill="url(#ab4)" stroke="#1a78e0"/><path d="M9 9.9L12.5 13.4H16L16.3 9L23.1 15.5L16.3 21.8L16 17.9H12.5L9 14.6Z" fill="#6a5cd0"/></svg>
<div style="position:absolute;left:370px;top:395.57px;font-size:12.2px;line-height:1;white-space:pre;color:#000;"><u>C</u>ase Labels:</div>
<div style="position:absolute;left:369px;top:410px;width:200px;height:20px;background:#fff;border:1px solid #1a64c8"></div>
<svg style="position:absolute;left:327px;top:444px" width="32" height="30" viewBox="0 0 32 30"><defs><linearGradient id="ab5" x1="0" y1="0" x2="0" y2="1"><stop offset="0" stop-color="#cce4fc"/><stop offset="0.5" stop-color="#a4ccf4"/><stop offset="1" stop-color="#64a6ec"/></linearGradient></defs><path d="M3.5 0.5h25l3 3v23l-3 3h-25l-3-3v-23z" fill="url(#ab5)" stroke="#1a78e0"/><path d="M9 9.9L12.5 13.4H16L16.3 9L23.1 15.5L16.3 21.8L16 17.9H12.5L9 14.6Z" fill="#6a5cd0"/></svg>
<div style="position:absolute;left:370px;top:439.67px;font-size:12.2px;line-height:1;white-space:pre;color:#000;">WLS Weig<u>h</u>t:</div>
<div style="position:absolute;left:369px;top:454px;width:200px;height:20px;background:#fff;border:1px solid #1a64c8"></div>
<div style="position:absolute;left:276px;top:482px;width:51px;height:24px;background:linear-gradient(90deg,#1a1a1a 0 3px,#1a1a1a 3px calc(100% - 3px),#1a1a1a calc(100% - 3px));clip-path:polygon(3.5px 0,calc(100% - 3.5px) 0,100% 3.5px,100% calc(100% - 3.5px),calc(100% - 3.5px) 100%,3.5px 100%,0 calc(100% - 3.5px),0 3.5px)"></div><div style="position:absolute;left:277px;top:483px;width:49px;height:22px;background:linear-gradient(#d4e8fc,#a8d0f6 45%,#6aa8ec);clip-path:polygon(2.9px 0,calc(100% - 2.9px) 0,100% 2.9px,100% calc(100% - 2.9px),calc(100% - 2.9px) 100%,2.9px 100%,0 calc(100% - 2.9px),0 2.9px)"></div><div style="position:absolute;left:276px;top:489.24px;font-size:12px;line-height:1;white-space:pre;color:#000;width:51px;text-align:center">OK</div>
<div style="position:absolute;left:331px;top:482px;width:51px;height:24px;background:#2a7ad8;clip-path:polygon(3.5px 0,calc(100% - 3.5px) 0,100% 3.5px,100% calc(100% - 3.5px),calc(100% - 3.5px) 100%,3.5px 100%,0 calc(100% - 3.5px),0 3.5px)"></div><div style="position:absolute;left:332px;top:483px;width:49px;height:22px;background:linear-gradient(#d4e8fc,#a8d0f6 45%,#6aa8ec);clip-path:polygon(2.9px 0,calc(100% - 2.9px) 0,100% 2.9px,100% calc(100% - 2.9px),calc(100% - 2.9px) 100%,2.9px 100%,0 calc(100% - 2.9px),0 2.9px)"></div><div style="position:absolute;left:331px;top:489.24px;font-size:12px;line-height:1;white-space:pre;color:#000;width:51px;text-align:center"><u>P</u>aste</div>
<div style="position:absolute;left:386px;top:482px;width:51px;height:24px;background:#2a7ad8;clip-path:polygon(3.5px 0,calc(100% - 3.5px) 0,100% 3.5px,100% calc(100% - 3.5px),calc(100% - 3.5px) 100%,3.5px 100%,0 calc(100% - 3.5px),0 3.5px)"></div><div style="position:absolute;left:387px;top:483px;width:49px;height:22px;background:linear-gradient(#d4e8fc,#a8d0f6 45%,#6aa8ec);clip-path:polygon(2.9px 0,calc(100% - 2.9px) 0,100% 2.9px,100% calc(100% - 2.9px),calc(100% - 2.9px) 100%,2.9px 100%,0 calc(100% - 2.9px),0 2.9px)"></div><div style="position:absolute;left:386px;top:489.24px;font-size:12px;line-height:1;white-space:pre;color:#000;width:51px;text-align:center"><u>R</u>eset</div>
<div style="position:absolute;left:441px;top:482px;width:51px;height:24px;background:#2a7ad8;clip-path:polygon(3.5px 0,calc(100% - 3.5px) 0,100% 3.5px,100% calc(100% - 3.5px),calc(100% - 3.5px) 100%,3.5px 100%,0 calc(100% - 3.5px),0 3.5px)"></div><div style="position:absolute;left:442px;top:483px;width:49px;height:22px;background:linear-gradient(#d4e8fc,#a8d0f6 45%,#6aa8ec);clip-path:polygon(2.9px 0,calc(100% - 2.9px) 0,100% 2.9px,100% calc(100% - 2.9px),calc(100% - 2.9px) 100%,2.9px 100%,0 calc(100% - 2.9px),0 2.9px)"></div><div style="position:absolute;left:441px;top:489.24px;font-size:12px;line-height:1;white-space:pre;color:#000;width:51px;text-align:center">Cancel</div>
<div style="position:absolute;left:496px;top:482px;width:51px;height:24px;background:#2a7ad8;clip-path:polygon(3.5px 0,calc(100% - 3.5px) 0,100% 3.5px,100% calc(100% - 3.5px),calc(100% - 3.5px) 100%,3.5px 100%,0 calc(100% - 3.5px),0 3.5px)"></div><div style="position:absolute;left:497px;top:483px;width:49px;height:22px;background:linear-gradient(#d4e8fc,#a8d0f6 45%,#6aa8ec);clip-path:polygon(2.9px 0,calc(100% - 2.9px) 0,100% 2.9px,100% calc(100% - 2.9px),calc(100% - 2.9px) 100%,2.9px 100%,0 calc(100% - 2.9px),0 2.9px)"></div><div style="position:absolute;left:496px;top:489.24px;font-size:12px;line-height:1;white-space:pre;color:#000;width:51px;text-align:center">Help</div>
</body></html>
